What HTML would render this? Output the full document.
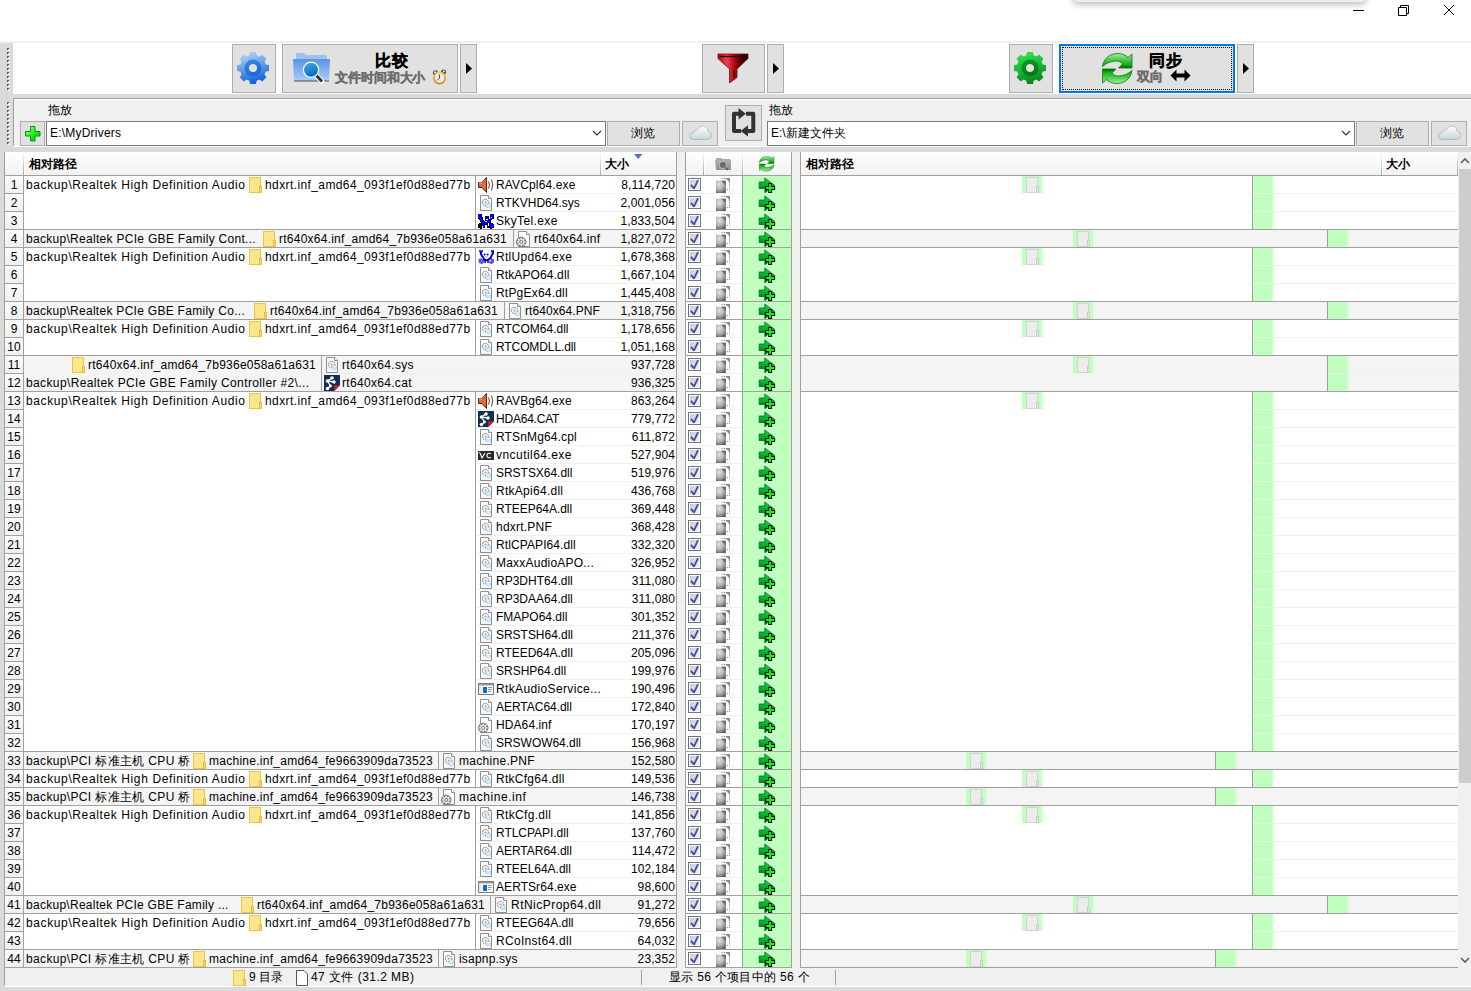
<!DOCTYPE html><html><head><meta charset="utf-8"><style>
html,body{margin:0;padding:0;width:1471px;height:991px;overflow:hidden;background:#fff;}
body{position:relative;font-family:"Liberation Sans",sans-serif;font-size:12px;color:#000;}
body>div,body>svg{position:absolute;}
body>div>svg{position:absolute;left:0;top:0;}
.t{white-space:nowrap;}
</style></head><body><svg width="0" height="0" style="position:absolute;left:0;top:0">
<defs>
 <linearGradient id="gDocFill" x1="0" y1="0" x2="0" y2="1"><stop offset="0" stop-color="#ffffff"/><stop offset="1" stop-color="#f2f4f6"/></linearGradient>
 <g id="iFolder"><rect x="0.5" y="0.5" width="11" height="15" fill="#fde58e" stroke="#ebc545"/><rect x="10.5" y="9.5" width="2" height="6" fill="#f6d76e" stroke="#e6bd45"/></g>
 <g id="iFolderG"><rect x="0.5" y="0.5" width="11" height="15" fill="#ececec" stroke="#d4d0d4"/><rect x="10.5" y="9.5" width="2" height="6" fill="#e6e6e6" stroke="#cfcbcf"/></g>
 <g id="iDoc"><path d="M2.5 0.5 H10.5 L13.5 3.5 V15.5 H2.5 Z" fill="url(#gDocFill)" stroke="#8f8f8f"/><path d="M10.5 0.5 V3.5 H13.5" fill="#fff" stroke="#8f8f8f"/>
   <circle cx="7.5" cy="7.5" r="3.2" fill="#f0f0f0" stroke="#6a6a6a" stroke-width="1" stroke-dasharray="1.2 0.9"/><path d="M6.5 7.5 H8.5 M7.5 6.5 V8.5" stroke="#a0a0a0" stroke-width="0.8"/><circle cx="10.4" cy="10.4" r="2.3" fill="#d8ecfa" stroke="#7ab8e8" stroke-width="0.9" stroke-dasharray="1 0.8"/></g>
 <g id="iInf"><path d="M2.5 0.5 H10.5 L13.5 3.5 V15.5 H2.5 Z" fill="#fff" stroke="#8f8f8f"/><path d="M10.5 0.5 V3.5 H13.5" fill="#fff" stroke="#8f8f8f"/>
   <path d="M3.40 7.78 L4.00 6.15 L6.40 6.15 L7.00 7.78 L6.13 7.42 L7.71 6.69 L9.41 8.39 L8.68 9.97 L8.32 9.10 L9.95 9.70 L9.95 12.10 L8.32 12.70 L8.68 11.83 L9.41 13.41 L7.71 15.11 L6.13 14.38 L7.00 14.02 L6.40 15.65 L4.00 15.65 L3.40 14.02 L4.27 14.38 L2.69 15.11 L0.99 13.41 L1.72 11.83 L2.08 12.70 L0.45 12.10 L0.45 9.70 L2.08 9.10 L1.72 9.97 L0.99 8.39 L2.69 6.69 L4.27 7.42 Z M3.70 10.90 A1.5 1.5 0 1 0 6.70 10.90 A1.5 1.5 0 1 0 3.70 10.90 Z" fill="#dfe4e8" stroke="#707070" stroke-width="0.9" fill-rule="evenodd"/></g>
 <g id="iSpeaker"><path d="M0.5 5.5 H4 L8.5 0.5 V15.5 L4 10.5 H0.5 Z" fill="#e8683c" stroke="#3a1408" stroke-width="0.9"/><path d="M1 6 H4" stroke="#ffc0a0" stroke-width="1"/>
   <path d="M10.5 4.5 Q12.5 8 10.5 11.5" fill="none" stroke="#6a3a2a" stroke-width="1"/><path d="M13.5 2.5 Q16 8 13.5 13.5" fill="none" stroke="#6a3a2a" stroke-width="1"/></g>
 <g id="iCrab"><rect x="0" y="1" width="1" height="1" fill="#0000ff"/><rect x="1" y="1" width="1" height="1" fill="#0000ff"/><rect x="2" y="1" width="1" height="1" fill="#0000ff"/><rect x="3" y="1" width="1" height="1" fill="#000"/><rect x="12" y="1" width="1" height="1" fill="#0000ff"/><rect x="13" y="1" width="1" height="1" fill="#000"/><rect x="14" y="1" width="1" height="1" fill="#0000ff"/><rect x="15" y="1" width="1" height="1" fill="#0000ff"/><rect x="0" y="2" width="1" height="1" fill="#0000ff"/><rect x="1" y="2" width="1" height="1" fill="#000"/><rect x="2" y="2" width="1" height="1" fill="#0000ff"/><rect x="3" y="2" width="1" height="1" fill="#000"/><rect x="12" y="2" width="1" height="1" fill="#0000ff"/><rect x="13" y="2" width="1" height="1" fill="#0000ff"/><rect x="14" y="2" width="1" height="1" fill="#0000ff"/><rect x="15" y="2" width="1" height="1" fill="#0000ff"/><rect x="0" y="3" width="1" height="1" fill="#0000ff"/><rect x="1" y="3" width="1" height="1" fill="#0000ff"/><rect x="2" y="3" width="1" height="1" fill="#0000ff"/><rect x="3" y="3" width="1" height="1" fill="#000"/><rect x="7" y="3" width="1" height="1" fill="#0000ff"/><rect x="8" y="3" width="1" height="1" fill="#000"/><rect x="9" y="3" width="1" height="1" fill="#0000ff"/><rect x="10" y="3" width="1" height="1" fill="#0000ff"/><rect x="12" y="3" width="1" height="1" fill="#0000ff"/><rect x="13" y="3" width="1" height="1" fill="#0000ff"/><rect x="14" y="3" width="1" height="1" fill="#0000ff"/><rect x="15" y="3" width="1" height="1" fill="#000"/><rect x="0" y="4" width="1" height="1" fill="#0000ff"/><rect x="1" y="4" width="1" height="1" fill="#0000ff"/><rect x="2" y="4" width="1" height="1" fill="#0000ff"/><rect x="3" y="4" width="1" height="1" fill="#0000ff"/><rect x="4" y="4" width="1" height="1" fill="#000"/><rect x="7" y="4" width="1" height="1" fill="#0000ff"/><rect x="8" y="4" width="1" height="1" fill="#000"/><rect x="9" y="4" width="1" height="1" fill="#0000ff"/><rect x="10" y="4" width="1" height="1" fill="#0000ff"/><rect x="12" y="4" width="1" height="1" fill="#0000ff"/><rect x="13" y="4" width="1" height="1" fill="#fff"/><rect x="14" y="4" width="1" height="1" fill="#0000ff"/><rect x="15" y="4" width="1" height="1" fill="#000"/><rect x="0" y="5" width="1" height="1" fill="#000"/><rect x="1" y="5" width="1" height="1" fill="#0000ff"/><rect x="2" y="5" width="1" height="1" fill="#0000ff"/><rect x="3" y="5" width="1" height="1" fill="#000"/><rect x="4" y="5" width="1" height="1" fill="#000"/><rect x="7" y="5" width="1" height="1" fill="#0000ff"/><rect x="8" y="5" width="1" height="1" fill="#0000ff"/><rect x="9" y="5" width="1" height="1" fill="#0000ff"/><rect x="10" y="5" width="1" height="1" fill="#000"/><rect x="12" y="5" width="1" height="1" fill="#0000ff"/><rect x="13" y="5" width="1" height="1" fill="#0000ff"/><rect x="14" y="5" width="1" height="1" fill="#000"/><rect x="15" y="5" width="1" height="1" fill="#000"/><rect x="1" y="6" width="1" height="1" fill="#000"/><rect x="2" y="6" width="1" height="1" fill="#0000ff"/><rect x="3" y="6" width="1" height="1" fill="#0000ff"/><rect x="4" y="6" width="1" height="1" fill="#000"/><rect x="7" y="6" width="1" height="1" fill="#0000ff"/><rect x="8" y="6" width="1" height="1" fill="#fff"/><rect x="9" y="6" width="1" height="1" fill="#fff"/><rect x="10" y="6" width="1" height="1" fill="#000"/><rect x="11" y="6" width="1" height="1" fill="#0000ff"/><rect x="12" y="6" width="1" height="1" fill="#0000ff"/><rect x="13" y="6" width="1" height="1" fill="#000"/><rect x="2" y="7" width="1" height="1" fill="#0000ff"/><rect x="3" y="7" width="1" height="1" fill="#0000ff"/><rect x="4" y="7" width="1" height="1" fill="#0000ff"/><rect x="5" y="7" width="1" height="1" fill="#000"/><rect x="7" y="7" width="1" height="1" fill="#000"/><rect x="8" y="7" width="1" height="1" fill="#0000ff"/><rect x="9" y="7" width="1" height="1" fill="#0000ff"/><rect x="10" y="7" width="1" height="1" fill="#000"/><rect x="11" y="7" width="1" height="1" fill="#0000ff"/><rect x="12" y="7" width="1" height="1" fill="#000"/><rect x="2" y="8" width="1" height="1" fill="#000"/><rect x="3" y="8" width="1" height="1" fill="#0000ff"/><rect x="4" y="8" width="1" height="1" fill="#0000ff"/><rect x="5" y="8" width="1" height="1" fill="#0000ff"/><rect x="6" y="8" width="1" height="1" fill="#000"/><rect x="7" y="8" width="1" height="1" fill="#fff"/><rect x="8" y="8" width="1" height="1" fill="#fff"/><rect x="9" y="8" width="1" height="1" fill="#0000ff"/><rect x="10" y="8" width="1" height="1" fill="#0000ff"/><rect x="11" y="8" width="1" height="1" fill="#0000ff"/><rect x="12" y="8" width="1" height="1" fill="#000"/><rect x="3" y="9" width="1" height="1" fill="#000"/><rect x="4" y="9" width="1" height="1" fill="#0000ff"/><rect x="5" y="9" width="1" height="1" fill="#0000ff"/><rect x="6" y="9" width="1" height="1" fill="#0000ff"/><rect x="7" y="9" width="1" height="1" fill="#000"/><rect x="8" y="9" width="1" height="1" fill="#0000ff"/><rect x="9" y="9" width="1" height="1" fill="#0000ff"/><rect x="10" y="9" width="1" height="1" fill="#0000ff"/><rect x="11" y="9" width="1" height="1" fill="#000"/><rect x="12" y="9" width="1" height="1" fill="#000"/><rect x="1" y="10" width="1" height="1" fill="#000"/><rect x="2" y="10" width="1" height="1" fill="#000"/><rect x="3" y="10" width="1" height="1" fill="#000"/><rect x="4" y="10" width="1" height="1" fill="#0000ff"/><rect x="5" y="10" width="1" height="1" fill="#0000ff"/><rect x="6" y="10" width="1" height="1" fill="#0000ff"/><rect x="7" y="10" width="1" height="1" fill="#0000ff"/><rect x="8" y="10" width="1" height="1" fill="#0000ff"/><rect x="9" y="10" width="1" height="1" fill="#0000ff"/><rect x="10" y="10" width="1" height="1" fill="#fff"/><rect x="11" y="10" width="1" height="1" fill="#000"/><rect x="12" y="10" width="1" height="1" fill="#000"/><rect x="13" y="10" width="1" height="1" fill="#0000ff"/><rect x="14" y="10" width="1" height="1" fill="#0000ff"/><rect x="0" y="11" width="1" height="1" fill="#000"/><rect x="1" y="11" width="1" height="1" fill="#0000ff"/><rect x="2" y="11" width="1" height="1" fill="#000"/><rect x="3" y="11" width="1" height="1" fill="#000"/><rect x="4" y="11" width="1" height="1" fill="#0000ff"/><rect x="5" y="11" width="1" height="1" fill="#0000ff"/><rect x="6" y="11" width="1" height="1" fill="#0000ff"/><rect x="7" y="11" width="1" height="1" fill="#000"/><rect x="8" y="11" width="1" height="1" fill="#000"/><rect x="9" y="11" width="1" height="1" fill="#0000ff"/><rect x="10" y="11" width="1" height="1" fill="#fff"/><rect x="11" y="11" width="1" height="1" fill="#000"/><rect x="12" y="11" width="1" height="1" fill="#0000ff"/><rect x="13" y="11" width="1" height="1" fill="#0000ff"/><rect x="14" y="11" width="1" height="1" fill="#0000ff"/><rect x="15" y="11" width="1" height="1" fill="#0000ff"/><rect x="0" y="12" width="1" height="1" fill="#000"/><rect x="1" y="12" width="1" height="1" fill="#000"/><rect x="2" y="12" width="1" height="1" fill="#000"/><rect x="3" y="12" width="1" height="1" fill="#000"/><rect x="4" y="12" width="1" height="1" fill="#000"/><rect x="5" y="12" width="1" height="1" fill="#0000ff"/><rect x="6" y="12" width="1" height="1" fill="#0000ff"/><rect x="9" y="12" width="1" height="1" fill="#0000ff"/><rect x="10" y="12" width="1" height="1" fill="#fff"/><rect x="11" y="12" width="1" height="1" fill="#000"/><rect x="12" y="12" width="1" height="1" fill="#0000ff"/><rect x="13" y="12" width="1" height="1" fill="#0000ff"/><rect x="14" y="12" width="1" height="1" fill="#0000ff"/><rect x="15" y="12" width="1" height="1" fill="#0000ff"/><rect x="0" y="13" width="1" height="1" fill="#000"/><rect x="1" y="13" width="1" height="1" fill="#000"/><rect x="2" y="13" width="1" height="1" fill="#000"/><rect x="3" y="13" width="1" height="1" fill="#000"/><rect x="5" y="13" width="1" height="1" fill="#0000ff"/><rect x="6" y="13" width="1" height="1" fill="#0000ff"/><rect x="9" y="13" width="1" height="1" fill="#0000ff"/><rect x="10" y="13" width="1" height="1" fill="#000"/><rect x="11" y="13" width="1" height="1" fill="#000"/><rect x="12" y="13" width="1" height="1" fill="#0000ff"/><rect x="13" y="13" width="1" height="1" fill="#0000ff"/><rect x="14" y="13" width="1" height="1" fill="#0000ff"/><rect x="15" y="13" width="1" height="1" fill="#0000ff"/><rect x="0" y="14" width="1" height="1" fill="#000"/><rect x="1" y="14" width="1" height="1" fill="#000"/><rect x="2" y="14" width="1" height="1" fill="#000"/><rect x="3" y="14" width="1" height="1" fill="#000"/><rect x="5" y="14" width="1" height="1" fill="#000"/><rect x="6" y="14" width="1" height="1" fill="#000"/><rect x="9" y="14" width="1" height="1" fill="#000"/><rect x="10" y="14" width="1" height="1" fill="#000"/><rect x="11" y="14" width="1" height="1" fill="#000"/><rect x="12" y="14" width="1" height="1" fill="#0000ff"/><rect x="13" y="14" width="1" height="1" fill="#0000ff"/><rect x="14" y="14" width="1" height="1" fill="#0000ff"/><rect x="15" y="14" width="1" height="1" fill="#000"/><rect x="2" y="15" width="1" height="1" fill="#000"/><rect x="3" y="15" width="1" height="1" fill="#000"/><rect x="12" y="15" width="1" height="1" fill="#000"/><rect x="13" y="15" width="1" height="1" fill="#000"/></g>
 <g id="iCrab2"><path d="M0.3 10.2 L2.8 9.2 L5.8 10.2 L6.6 13 L4 15.3 L1 14 Z" fill="#5a5ae0"/><path d="M10.3 10.2 L13.3 9.2 L16 10.2 L16 13.5 L13.5 15.3 L10.8 13.8 Z" fill="#5a5ae0"/><circle cx="11.8" cy="11.6" r="1" fill="#fff"/>
   <path d="M2.6 3.8 L3.6 6.5 L5.2 8.3 L6.2 10.3 L8.6 11.3 L10.6 10.5 L12.6 8.8 L13.8 6.5 L14.8 3.8" fill="none" stroke="#0000d0" stroke-width="1.9" stroke-linejoin="round"/>
   <path d="M1.6 1 L2.8 4.2 L4.6 1.2" fill="none" stroke="#0000d0" stroke-width="1.6"/><path d="M13.4 1.2 L15 4.2 L16.2 1" fill="none" stroke="#0000d0" stroke-width="1.6"/>
   <circle cx="6.6" cy="5.6" r="1" fill="#0000c8"/><circle cx="9.6" cy="5.6" r="1" fill="#0000c8"/><path d="M7 7.6 Q8.2 8.8 9.6 7.6" fill="none" stroke="#9a9ae8" stroke-width="1"/>
   <path d="M6.6 10.5 L7.4 14.2 M9.6 11 L10.2 14" stroke="#0000c8" stroke-width="1.4"/></g>
 <g id="iCat"><path d="M0 0 H16 V10 L10 16 H0 Z" fill="#133050"/><path d="M8 3 L3.5 6 L9.5 7 M3.5 6 L6.5 11 L3.5 13.5" stroke="#fff" stroke-width="1.3" fill="none"/>
   <circle cx="8" cy="3" r="1.8" fill="#fff"/><circle cx="3.5" cy="6" r="1.8" fill="#fff"/><circle cx="10" cy="7" r="1.7" fill="#fff"/><circle cx="6.5" cy="11" r="1.4" fill="#fff"/><circle cx="3.5" cy="13.5" r="1.8" fill="#fff"/>
   <path d="M10 10.5 H16 L10.5 16 Z" fill="#d81e2a"/></g>
 <g id="iVnc"><rect x="0" y="4" width="16" height="9" fill="#2a2a2a"/><path d="M2 6 L4 11 L7 6 M13 6.5 Q9 5.5 9 8.5 Q9 11.5 13 10.5" fill="none" stroke="#fff" stroke-width="1.1"/><path d="M0.5 6 L2 5" stroke="#fff" stroke-width="0.8"/></g>
 <g id="iWin"><rect x="0.5" y="2.5" width="15" height="11" fill="#fff" stroke="#7a7a7a"/><rect x="1" y="3" width="14" height="1.5" fill="#9a9a9a"/><rect x="1" y="4.5" width="2.5" height="8.5" fill="#e8e8e8"/><rect x="5" y="6" width="4" height="6" fill="#0a6ad8"/><path d="M10 6.5 H14 M10 8.5 H14 M10 10.5 H13" stroke="#8a8a8a" stroke-width="0.9"/></g>
 <linearGradient id="gChk" x1="0" y1="0" x2="1" y2="1"><stop offset="0" stop-color="#c8ccd8"/><stop offset="1" stop-color="#f0f0f4"/></linearGradient>
 <g id="iCheck"><rect x="0.5" y="0.5" width="12" height="12" fill="#fff" stroke="#747474"/><rect x="2" y="2" width="9" height="9" fill="url(#gChk)"/><path d="M3.3 7.3 L6 10.3 L9.8 2.7" fill="none" stroke="#3a4f9c" stroke-width="1.8" stroke-linecap="round" stroke-linejoin="round"/></g>
 <linearGradient id="gCat" x1="0" y1="0" x2="1" y2="0.3"><stop offset="0" stop-color="#cfcfcf"/><stop offset="0.45" stop-color="#9a9a9a"/><stop offset="1" stop-color="#5a5a5a"/></linearGradient>
 <radialGradient id="gCat2" cx="0.35" cy="0.3" r="0.8"><stop offset="0" stop-color="#e4e4e4"/><stop offset="0.55" stop-color="#b0b0b0"/><stop offset="1" stop-color="#5a5a5a"/></radialGradient>
 <g id="iCatg"><path d="M4 4.7 H13.8 V17 H4 Z" fill="url(#gCat2)"/><path d="M9.3 4.7 H13.8 V9.2 Z" fill="#6a6a6a"/>
   <path d="M9.5 2.5 H17.5 V13.5 H14" fill="none" stroke="#777" stroke-width="1" stroke-dasharray="1 1.3"/><path d="M13 2 H18 V6.5 Z" fill="#8a8a8a"/></g>
 <linearGradient id="gAdd" x1="0.2" y1="0" x2="0.1" y2="1"><stop offset="0" stop-color="#10e040"/><stop offset="0.5" stop-color="#00a828"/><stop offset="1" stop-color="#005a10"/></linearGradient>
 <g id="iAdd"><path d="M4.2 6 H9.8 V2 L19.8 9.6 L9.8 16.7 V12.5 H4.2 Z" fill="url(#gAdd)" stroke="#00501a" stroke-width="0.7" stroke-linejoin="round"/>
   <path d="M13.1 7 H17.1 V10 H20.1 V14 H17.1 V17 H13.1 V14 H10.1 V10 H13.1 Z" fill="#000"/><path d="M14.1 8 H16.1 V11 H19.1 V13 H16.1 V16 H14.1 V13 H11.1 V11 H14.1 Z" fill="#00ff00"/></g>
 <g id="iTri"><path d="M0 0 L6 5.5 L0 11 Z" fill="#000"/></g>
 <linearGradient id="gSyncA" x1="0" y1="0" x2="0" y2="1"><stop offset="0" stop-color="#a0f0a0"/><stop offset="0.45" stop-color="#48c848"/><stop offset="0.75" stop-color="#18b018"/><stop offset="1" stop-color="#006a00"/></linearGradient>
 <g id="iSyncHalf"><path d="M0.5 13.5 C1.5 5.5 8 0.5 15.5 0.5 C20 0.5 23.5 2 26 4.5 L30 1 V15 H16.5 L20.5 11 C19 9.5 17.5 8 15 8 C9 8 4 10 0.5 13.5 Z" fill="url(#gSyncA)" stroke="#067a06" stroke-width="0.8"/></g>
 <g id="iSync"><use href="#iSyncHalf"/><use href="#iSyncHalf" transform="rotate(180 15.25 15.5)"/></g>
</defs></svg><div style="left:0px;top:0px;width:1471px;height:41px;background:#fff"></div>
<div style="left:1074px;top:-10px;width:291px;height:12px;background:#e9eef6;box-shadow:0 1px 7px 1px rgba(0,0,0,0.30);border-radius:0 0 4px 4px"></div>
<svg style="left:1350px;top:0px" width="121" height="22" viewBox="0 0 121 22" ><path d="M3 10.5 H14" stroke="#000" stroke-width="1"/><path d="M48.5 7.5 H56.5 V15.5 H48.5 Z M50.5 7.5 V5.5 H58.5 V13.5 H56.5" fill="none" stroke="#000"/><path d="M94 5 L104 15 M104 5 L94 15" stroke="#000" stroke-width="1"/></svg>
<div style="left:0px;top:41px;width:1471px;height:2px;background:#f0f0f0"></div>
<div style="left:0px;top:43px;width:13px;height:948px;background:#dadada"></div>
<div style="left:13px;top:43px;width:1458px;height:51px;background:#fff"></div>
<div style="left:13px;top:94px;width:1458px;height:4px;background:#dadada"></div>
<div style="left:7px;top:48px;width:2px;height:1px;background:#585858"></div>
<div style="left:7px;top:49px;width:1px;height:1px;background:#585858"></div>
<div style="left:8px;top:49px;width:1px;height:1px;background:#c8c8c8"></div>
<div style="left:9px;top:49px;width:1px;height:1px;background:#f4f4f4"></div>
<div style="left:8px;top:50px;width:2px;height:1px;background:#fff"></div>
<div style="left:7px;top:52px;width:2px;height:1px;background:#585858"></div>
<div style="left:7px;top:53px;width:1px;height:1px;background:#585858"></div>
<div style="left:8px;top:53px;width:1px;height:1px;background:#c8c8c8"></div>
<div style="left:9px;top:53px;width:1px;height:1px;background:#f4f4f4"></div>
<div style="left:8px;top:54px;width:2px;height:1px;background:#fff"></div>
<div style="left:7px;top:56px;width:2px;height:1px;background:#585858"></div>
<div style="left:7px;top:57px;width:1px;height:1px;background:#585858"></div>
<div style="left:8px;top:57px;width:1px;height:1px;background:#c8c8c8"></div>
<div style="left:9px;top:57px;width:1px;height:1px;background:#f4f4f4"></div>
<div style="left:8px;top:58px;width:2px;height:1px;background:#fff"></div>
<div style="left:7px;top:60px;width:2px;height:1px;background:#585858"></div>
<div style="left:7px;top:61px;width:1px;height:1px;background:#585858"></div>
<div style="left:8px;top:61px;width:1px;height:1px;background:#c8c8c8"></div>
<div style="left:9px;top:61px;width:1px;height:1px;background:#f4f4f4"></div>
<div style="left:8px;top:62px;width:2px;height:1px;background:#fff"></div>
<div style="left:7px;top:64px;width:2px;height:1px;background:#585858"></div>
<div style="left:7px;top:65px;width:1px;height:1px;background:#585858"></div>
<div style="left:8px;top:65px;width:1px;height:1px;background:#c8c8c8"></div>
<div style="left:9px;top:65px;width:1px;height:1px;background:#f4f4f4"></div>
<div style="left:8px;top:66px;width:2px;height:1px;background:#fff"></div>
<div style="left:7px;top:68px;width:2px;height:1px;background:#585858"></div>
<div style="left:7px;top:69px;width:1px;height:1px;background:#585858"></div>
<div style="left:8px;top:69px;width:1px;height:1px;background:#c8c8c8"></div>
<div style="left:9px;top:69px;width:1px;height:1px;background:#f4f4f4"></div>
<div style="left:8px;top:70px;width:2px;height:1px;background:#fff"></div>
<div style="left:7px;top:72px;width:2px;height:1px;background:#585858"></div>
<div style="left:7px;top:73px;width:1px;height:1px;background:#585858"></div>
<div style="left:8px;top:73px;width:1px;height:1px;background:#c8c8c8"></div>
<div style="left:9px;top:73px;width:1px;height:1px;background:#f4f4f4"></div>
<div style="left:8px;top:74px;width:2px;height:1px;background:#fff"></div>
<div style="left:7px;top:76px;width:2px;height:1px;background:#585858"></div>
<div style="left:7px;top:77px;width:1px;height:1px;background:#585858"></div>
<div style="left:8px;top:77px;width:1px;height:1px;background:#c8c8c8"></div>
<div style="left:9px;top:77px;width:1px;height:1px;background:#f4f4f4"></div>
<div style="left:8px;top:78px;width:2px;height:1px;background:#fff"></div>
<div style="left:7px;top:80px;width:2px;height:1px;background:#585858"></div>
<div style="left:7px;top:81px;width:1px;height:1px;background:#585858"></div>
<div style="left:8px;top:81px;width:1px;height:1px;background:#c8c8c8"></div>
<div style="left:9px;top:81px;width:1px;height:1px;background:#f4f4f4"></div>
<div style="left:8px;top:82px;width:2px;height:1px;background:#fff"></div>
<div style="left:7px;top:84px;width:2px;height:1px;background:#585858"></div>
<div style="left:7px;top:85px;width:1px;height:1px;background:#585858"></div>
<div style="left:8px;top:85px;width:1px;height:1px;background:#c8c8c8"></div>
<div style="left:9px;top:85px;width:1px;height:1px;background:#f4f4f4"></div>
<div style="left:8px;top:86px;width:2px;height:1px;background:#fff"></div>
<div style="left:7px;top:88px;width:2px;height:1px;background:#585858"></div>
<div style="left:7px;top:89px;width:1px;height:1px;background:#585858"></div>
<div style="left:8px;top:89px;width:1px;height:1px;background:#c8c8c8"></div>
<div style="left:9px;top:89px;width:1px;height:1px;background:#f4f4f4"></div>
<div style="left:8px;top:90px;width:2px;height:1px;background:#fff"></div>
<div style="left:7px;top:102px;width:2px;height:1px;background:#585858"></div>
<div style="left:7px;top:103px;width:1px;height:1px;background:#585858"></div>
<div style="left:8px;top:103px;width:1px;height:1px;background:#c8c8c8"></div>
<div style="left:9px;top:103px;width:1px;height:1px;background:#f4f4f4"></div>
<div style="left:8px;top:104px;width:2px;height:1px;background:#fff"></div>
<div style="left:7px;top:106px;width:2px;height:1px;background:#585858"></div>
<div style="left:7px;top:107px;width:1px;height:1px;background:#585858"></div>
<div style="left:8px;top:107px;width:1px;height:1px;background:#c8c8c8"></div>
<div style="left:9px;top:107px;width:1px;height:1px;background:#f4f4f4"></div>
<div style="left:8px;top:108px;width:2px;height:1px;background:#fff"></div>
<div style="left:7px;top:110px;width:2px;height:1px;background:#585858"></div>
<div style="left:7px;top:111px;width:1px;height:1px;background:#585858"></div>
<div style="left:8px;top:111px;width:1px;height:1px;background:#c8c8c8"></div>
<div style="left:9px;top:111px;width:1px;height:1px;background:#f4f4f4"></div>
<div style="left:8px;top:112px;width:2px;height:1px;background:#fff"></div>
<div style="left:7px;top:114px;width:2px;height:1px;background:#585858"></div>
<div style="left:7px;top:115px;width:1px;height:1px;background:#585858"></div>
<div style="left:8px;top:115px;width:1px;height:1px;background:#c8c8c8"></div>
<div style="left:9px;top:115px;width:1px;height:1px;background:#f4f4f4"></div>
<div style="left:8px;top:116px;width:2px;height:1px;background:#fff"></div>
<div style="left:7px;top:118px;width:2px;height:1px;background:#585858"></div>
<div style="left:7px;top:119px;width:1px;height:1px;background:#585858"></div>
<div style="left:8px;top:119px;width:1px;height:1px;background:#c8c8c8"></div>
<div style="left:9px;top:119px;width:1px;height:1px;background:#f4f4f4"></div>
<div style="left:8px;top:120px;width:2px;height:1px;background:#fff"></div>
<div style="left:7px;top:122px;width:2px;height:1px;background:#585858"></div>
<div style="left:7px;top:123px;width:1px;height:1px;background:#585858"></div>
<div style="left:8px;top:123px;width:1px;height:1px;background:#c8c8c8"></div>
<div style="left:9px;top:123px;width:1px;height:1px;background:#f4f4f4"></div>
<div style="left:8px;top:124px;width:2px;height:1px;background:#fff"></div>
<div style="left:7px;top:126px;width:2px;height:1px;background:#585858"></div>
<div style="left:7px;top:127px;width:1px;height:1px;background:#585858"></div>
<div style="left:8px;top:127px;width:1px;height:1px;background:#c8c8c8"></div>
<div style="left:9px;top:127px;width:1px;height:1px;background:#f4f4f4"></div>
<div style="left:8px;top:128px;width:2px;height:1px;background:#fff"></div>
<div style="left:7px;top:130px;width:2px;height:1px;background:#585858"></div>
<div style="left:7px;top:131px;width:1px;height:1px;background:#585858"></div>
<div style="left:8px;top:131px;width:1px;height:1px;background:#c8c8c8"></div>
<div style="left:9px;top:131px;width:1px;height:1px;background:#f4f4f4"></div>
<div style="left:8px;top:132px;width:2px;height:1px;background:#fff"></div>
<div style="left:7px;top:134px;width:2px;height:1px;background:#585858"></div>
<div style="left:7px;top:135px;width:1px;height:1px;background:#585858"></div>
<div style="left:8px;top:135px;width:1px;height:1px;background:#c8c8c8"></div>
<div style="left:9px;top:135px;width:1px;height:1px;background:#f4f4f4"></div>
<div style="left:8px;top:136px;width:2px;height:1px;background:#fff"></div>
<div style="left:7px;top:138px;width:2px;height:1px;background:#585858"></div>
<div style="left:7px;top:139px;width:1px;height:1px;background:#585858"></div>
<div style="left:8px;top:139px;width:1px;height:1px;background:#c8c8c8"></div>
<div style="left:9px;top:139px;width:1px;height:1px;background:#f4f4f4"></div>
<div style="left:8px;top:140px;width:2px;height:1px;background:#fff"></div>
<div style="left:7px;top:142px;width:2px;height:1px;background:#585858"></div>
<div style="left:7px;top:143px;width:1px;height:1px;background:#585858"></div>
<div style="left:8px;top:143px;width:1px;height:1px;background:#c8c8c8"></div>
<div style="left:9px;top:143px;width:1px;height:1px;background:#f4f4f4"></div>
<div style="left:8px;top:144px;width:2px;height:1px;background:#fff"></div>
<div style="left:232px;top:44px;width:42px;height:47px;background:#e1e1e1;border:1px solid #adadad;"></div>
<div style="left:282px;top:44px;width:174px;height:47px;background:#e1e1e1;border:1px solid #adadad;"></div>
<div style="left:460px;top:44px;width:15px;height:47px;background:#e1e1e1;border:1px solid #adadad;"></div>
<div style="left:702px;top:44px;width:61px;height:47px;background:#e1e1e1;border:1px solid #adadad;"></div>
<div style="left:767px;top:44px;width:15px;height:47px;background:#e1e1e1;border:1px solid #adadad;"></div>
<div style="left:1009px;top:44px;width:42px;height:47px;background:#e1e1e1;border:1px solid #adadad;"></div>
<div style="left:1059px;top:44px;width:172px;height:45px;background:#e1e1e1;border:2px solid #0078d7"></div>
<div style="left:1061px;top:46px;width:172px;height:45px;border:1px dotted #111;box-sizing:border-box;left:1062px;top:47px;width:170px;height:43px"></div>
<div style="left:1237px;top:44px;width:15px;height:47px;background:#e1e1e1;border:1px solid #adadad;"></div>
<svg style="left:466px;top:63px" width="6" height="11"><use href="#iTri"/></svg>
<svg style="left:773px;top:63px" width="6" height="11"><use href="#iTri"/></svg>
<svg style="left:1243px;top:63px" width="6" height="11"><use href="#iTri"/></svg>
<div style="left:235px;top:50px;width:36px;height:36px"><svg width="36" height="36" viewBox="0 0 36 36"><defs><linearGradient id="gbg" x1="0" y1="0" x2="0.3" y2="1"><stop offset="0" stop-color="#c4e0fb"/><stop offset="1" stop-color="#1466d6"/></linearGradient><linearGradient id="gbr" x1="0" y1="0" x2="0.4" y2="1"><stop offset="0" stop-color="#3a8ae6"/><stop offset="1" stop-color="#1a6ad8"/></linearGradient></defs><path d="M14.40 5.30 L15.00 1.98 L21.00 1.98 L21.60 5.30 L24.43 6.47 L27.21 4.55 L31.45 8.79 L29.53 11.57 L30.70 14.40 L34.02 15.00 L34.02 21.00 L30.70 21.60 L29.53 24.43 L31.45 27.21 L27.21 31.45 L24.43 29.53 L21.60 30.70 L21.00 34.02 L15.00 34.02 L14.40 30.70 L11.57 29.53 L8.79 31.45 L4.55 27.21 L6.47 24.43 L5.30 21.60 L1.98 21.00 L1.98 15.00 L5.30 14.40 L6.47 11.57 L4.55 8.79 L8.79 4.55 L11.57 6.47 Z M13.90 18.00 A4.1 4.1 0 1 0 22.10 18.00 A4.1 4.1 0 1 0 13.90 18.00 Z" fill="url(#gbg)" fill-rule="evenodd"/><path d="M9.60 18.00 A8.4 8.4 0 1 0 26.40 18.00 A8.4 8.4 0 1 0 9.60 18.00 Z M13.90 18.00 A4.1 4.1 0 1 0 22.10 18.00 A4.1 4.1 0 1 0 13.90 18.00 Z" fill="url(#gbr)" fill-rule="evenodd"/></svg></div>
<div style="left:1012px;top:50px;width:36px;height:36px"><svg width="36" height="36" viewBox="0 0 36 36"><defs><linearGradient id="ggg" x1="0" y1="0" x2="0.3" y2="1"><stop offset="0" stop-color="#30f050"/><stop offset="1" stop-color="#0a8a22"/></linearGradient><linearGradient id="ggr" x1="0" y1="0" x2="0.4" y2="1"><stop offset="0" stop-color="#0c9a2a"/><stop offset="1" stop-color="#067a1a"/></linearGradient></defs><path d="M14.40 5.30 L15.00 1.98 L21.00 1.98 L21.60 5.30 L24.43 6.47 L27.21 4.55 L31.45 8.79 L29.53 11.57 L30.70 14.40 L34.02 15.00 L34.02 21.00 L30.70 21.60 L29.53 24.43 L31.45 27.21 L27.21 31.45 L24.43 29.53 L21.60 30.70 L21.00 34.02 L15.00 34.02 L14.40 30.70 L11.57 29.53 L8.79 31.45 L4.55 27.21 L6.47 24.43 L5.30 21.60 L1.98 21.00 L1.98 15.00 L5.30 14.40 L6.47 11.57 L4.55 8.79 L8.79 4.55 L11.57 6.47 Z M13.90 18.00 A4.1 4.1 0 1 0 22.10 18.00 A4.1 4.1 0 1 0 13.90 18.00 Z" fill="url(#ggg)" fill-rule="evenodd"/><path d="M9.60 18.00 A8.4 8.4 0 1 0 26.40 18.00 A8.4 8.4 0 1 0 9.60 18.00 Z M13.90 18.00 A4.1 4.1 0 1 0 22.10 18.00 A4.1 4.1 0 1 0 13.90 18.00 Z" fill="url(#ggr)" fill-rule="evenodd"/></svg></div>
<svg style="left:290px;top:48px" width="44" height="40" viewBox="0 0 44 40" ><defs><linearGradient id="gFB" x1="0" y1="0" x2="0" y2="1"><stop offset="0" stop-color="#5a94e4"/><stop offset="1" stop-color="#a6cef8"/></linearGradient><linearGradient id="gMag" x1="0" y1="0" x2="0.4" y2="1"><stop offset="0" stop-color="#4aaae0"/><stop offset="1" stop-color="#0070c6"/></linearGradient></defs><path d="M6 11 V6 Q6 5 7 5 H14 L16 7 H36 Q37 7 37 8 V11 Z" fill="#9ec2f0"/><path d="M3 11 H40 L39 33 H4 Z" fill="url(#gFB)"/><path d="M4 33 H39" stroke="#505050" stroke-width="1.2"/><path d="M26 27 L32 33.5" stroke="#fff" stroke-width="5" stroke-linecap="round"/><path d="M26 27 L32 33.5" stroke="#333" stroke-width="3" stroke-linecap="butt"/><circle cx="21" cy="21.8" r="8.2" fill="#fff"/><circle cx="21" cy="21.8" r="7" fill="url(#gMag)"/></svg>
<svg style="left:713px;top:50px" width="40" height="38" viewBox="0 0 40 38" ><defs><linearGradient id="gFun" x1="0" y1="0" x2="1" y2="0"><stop offset="0" stop-color="#a80c14"/><stop offset="0.3" stop-color="#e8454c"/><stop offset="0.5" stop-color="#c01018"/><stop offset="0.75" stop-color="#500000"/><stop offset="1" stop-color="#180000"/></linearGradient></defs><path d="M5 4 H35 V8.6 L24 19 V27.5 L16.5 33 V19 L5 8.6 Z" fill="url(#gFun)" stroke="#7a0a0a" stroke-width="0.8"/><path d="M6.5 6.5 H33.5" stroke="#300000" stroke-width="1.4"/><path d="M21 20 V27" stroke="#300000" stroke-width="1.5"/></svg>
<svg style="left:1102px;top:53px" width="32" height="32"><use href="#iSync"/></svg>
<svg style="left:1170px;top:69px" width="22" height="13" viewBox="0 0 22 13" ><path d="M0.5 6.5 L6.5 0.5 V4.5 H14.5 V0.5 L20.5 6.5 L14.5 12.5 V8.5 H6.5 V12.5 Z" fill="#000"/></svg>
<div class="t" style="left:375px;top:51px;height:20px;line-height:20px;font-size:16px;font-weight:bold;letter-spacing:0.5px;-webkit-text-stroke:0.3px #000">比较</div>
<div class="t" style="left:335px;top:69px;height:18px;line-height:18px;font-size:13px;font-weight:bold;color:#6d6d6d;letter-spacing:-0.1px;-webkit-text-stroke:0.35px #6d6d6d">文件时间和大小</div>
<svg style="left:431px;top:69px" width="17" height="17" viewBox="0 0 17 17" ><defs><linearGradient id="gClk" x1="0" y1="0" x2="0" y2="1"><stop offset="0" stop-color="#ffd040"/><stop offset="1" stop-color="#e07a00"/></linearGradient></defs><circle cx="4.5" cy="3.8" r="2.6" fill="#4a5560"/><circle cx="12.5" cy="3" r="2.6" fill="#4a5560"/><circle cx="4" cy="3.2" r="0.9" fill="#fff"/><circle cx="12.8" cy="2.4" r="0.9" fill="#fff"/><circle cx="8.5" cy="9" r="6.5" fill="url(#gClk)"/><circle cx="8.5" cy="9" r="4.8" fill="#d8f0fa"/><path d="M8.5 9 V5.5 M8.5 9 L6 11.5" stroke="#d02020" stroke-width="1"/></svg>
<div class="t" style="left:1149px;top:51px;height:20px;line-height:20px;font-size:16px;font-weight:bold;letter-spacing:0.5px;-webkit-text-stroke:0.3px #000">同步</div>
<div class="t" style="left:1137px;top:68px;height:18px;line-height:18px;font-size:13px;font-weight:bold;color:#6d6d6d;letter-spacing:-0.5px;-webkit-text-stroke:0.35px #6d6d6d">双向</div>
<div style="left:13px;top:98px;width:1458px;height:48px;background:#f0f0f0"></div>
<div style="left:13px;top:98px;width:1458px;height:1px;background:#a0a0a0"></div>
<div style="left:13px;top:98px;width:1px;height:48px;background:#a0a0a0"></div>
<div style="left:14px;top:99px;width:1457px;height:1px;background:#fbfbfb"></div>
<div style="left:13px;top:146px;width:1458px;height:1px;background:#fff"></div>
<div style="left:13px;top:147px;width:1458px;height:5px;background:#dadada"></div>
<div class="t" style="left:48px;top:101px;height:18px;line-height:18px;font-size:12px">拖放</div>
<div class="t" style="left:769px;top:101px;height:18px;line-height:18px;font-size:12px">拖放</div>
<div style="left:20px;top:121px;width:23px;height:23px;background:#e1e1e1;border:1px solid #adadad;"></div>
<svg style="left:25px;top:126px" width="16" height="16" viewBox="0 0 16 16" ><defs><linearGradient id="gPl" x1="0" y1="0" x2="1" y2="1"><stop offset="0" stop-color="#c0ffc0"/><stop offset="0.5" stop-color="#20f020"/><stop offset="1" stop-color="#00c000"/></linearGradient></defs><path d="M5.5 0.5 H10 V5.5 H15 V10 H10 V15 H5.5 V10 H0.5 V5.5 H5.5 Z" fill="url(#gPl)" stroke="#009a00" stroke-width="1"/></svg>
<div style="left:46px;top:121px;width:560px;height:25px;background:#fff;border:1px solid #7a7a7a;box-sizing:border-box"></div>
<div class="t" style="left:50px;top:124px;height:18px;line-height:18px;letter-spacing:0.213px;font-size:12px">E:\MyDrivers</div>
<div style="left:607px;top:121px;width:71px;height:23px;background:#e1e1e1;border:1px solid #adadad;"></div>
<div class="t" style="left:631px;top:124px;height:18px;line-height:18px;font-size:12px">浏览</div>
<div style="left:682px;top:121px;width:34px;height:23px;background:#e1e1e1;border:1px solid #adadad;"></div>
<div style="left:725px;top:105px;width:35px;height:34px;background:#e1e1e1;border:1px solid #adadad;"></div>
<div style="left:767px;top:121px;width:588px;height:25px;background:#fff;border:1px solid #7a7a7a;box-sizing:border-box"></div>
<div class="t" style="left:771px;top:124px;height:18px;line-height:18px;font-size:12px">E:\新建文件夹</div>
<div style="left:1356px;top:121px;width:71px;height:23px;background:#e1e1e1;border:1px solid #adadad;"></div>
<div class="t" style="left:1380px;top:124px;height:18px;line-height:18px;font-size:12px">浏览</div>
<div style="left:1431px;top:121px;width:34px;height:23px;background:#e1e1e1;border:1px solid #adadad;"></div>
<svg style="left:592px;top:130px" width="10" height="7" viewBox="0 0 10 7" ><path d="M1 1 L5 5 L9 1" fill="none" stroke="#333" stroke-width="1.1"/></svg>
<svg style="left:1341px;top:130px" width="10" height="7" viewBox="0 0 10 7" ><path d="M1 1 L5 5 L9 1" fill="none" stroke="#333" stroke-width="1.1"/></svg>
<svg style="left:689px;top:125px" width="23" height="16" viewBox="0 0 23 16" ><defs><linearGradient id="gCl" x1="0" y1="0" x2="0" y2="1"><stop offset="0" stop-color="#ffffff"/><stop offset="1" stop-color="#c8d4da"/></linearGradient></defs><path d="M4 14.5 Q0.5 14.5 0.5 11 Q0.5 7.5 4.5 7.5 Q6 4.5 8.5 4.5 Q10 1 13.5 1 Q18.5 1 19 6 Q22.5 7 22.5 10.5 Q22.5 14.5 18.5 14.5 Z" fill="url(#gCl)" stroke="#a8b4ba" stroke-width="0.8"/></svg>
<svg style="left:1438px;top:125px" width="23" height="16" viewBox="0 0 23 16" ><defs><linearGradient id="gCl" x1="0" y1="0" x2="0" y2="1"><stop offset="0" stop-color="#ffffff"/><stop offset="1" stop-color="#c8d4da"/></linearGradient></defs><path d="M4 14.5 Q0.5 14.5 0.5 11 Q0.5 7.5 4.5 7.5 Q6 4.5 8.5 4.5 Q10 1 13.5 1 Q18.5 1 19 6 Q22.5 7 22.5 10.5 Q22.5 14.5 18.5 14.5 Z" fill="url(#gCl)" stroke="#a8b4ba" stroke-width="0.8"/></svg>
<svg style="left:732px;top:108px" width="24" height="29" viewBox="0 0 24 29" ><path d="M7 5.7 H2 V23 H9" fill="none" stroke="#333" stroke-width="4" stroke-linejoin="round"/><path d="M14 5.7 H21.3 V23 H15.5" fill="none" stroke="#333" stroke-width="4" stroke-linejoin="round"/><path d="M6.5 0 L13.8 5.8 L6.5 11.5 Z" fill="#333"/><path d="M16 17.3 L8.6 23 L16 28.5 Z" fill="#333"/></svg>
<div style="left:4px;top:152px;width:673px;height:816px;background:#fff"></div>
<div style="left:677px;top:152px;width:8px;height:816px;background:#f0f0f0"></div>
<div style="left:685px;top:152px;width:107px;height:816px;background:#fff"></div>
<div style="left:792px;top:152px;width:8px;height:816px;background:#f0f0f0"></div>
<div style="left:800px;top:152px;width:658px;height:816px;background:#fff"></div>
<div style="left:4px;top:152px;width:672px;height:23px;background:linear-gradient(#ffffff,#f1f1f1)"></div>
<div style="left:685px;top:152px;width:106px;height:23px;background:linear-gradient(#ffffff,#f1f1f1)"></div>
<div style="left:800px;top:152px;width:657px;height:23px;background:linear-gradient(#ffffff,#f1f1f1)"></div>
<div style="left:24px;top:176px;width:652px;height:53px;background:#fff"></div>
<div style="left:801px;top:176px;width:657px;height:53px;background:#fff"></div>
<div style="left:475px;top:176px;width:1px;height:53px;background:#a0a0a0"></div>
<div style="left:1252px;top:176px;width:1px;height:53px;background:#a0a0a0"></div>
<div style="left:476px;top:193px;width:200px;height:1px;background:#f0f0f0"></div>
<div style="left:1253px;top:193px;width:205px;height:1px;background:#f0f0f0"></div>
<div style="left:476px;top:211px;width:200px;height:1px;background:#f0f0f0"></div>
<div style="left:1253px;top:211px;width:205px;height:1px;background:#f0f0f0"></div>
<div class="t" style="left:26px;top:176px;height:18px;line-height:18px;letter-spacing:0.616px;">backup\Realtek High Definition Audio</div>
<svg style="left:249px;top:177px" width="13" height="16"><use href="#iFolder"/></svg>
<div class="t" style="left:265px;top:176px;height:18px;line-height:18px;letter-spacing:0.395px;">hdxrt.inf_amd64_093f1ef0d88ed77b</div>
<div style="left:1022px;top:176px;width:22px;height:17px;background:linear-gradient(90deg,#c0ffc0 0,#c0ffc0 18.5px,rgba(192,255,192,0) 22px)"></div>
<svg style="left:1026px;top:177px" width="13" height="16"><use href="#iFolderG"/></svg>
<div style="left:1253px;top:176px;width:22px;height:17px;background:linear-gradient(90deg,#c0ffc0 0,#c0ffc0 18.5px,rgba(192,255,192,0) 22px)"></div>
<div style="left:1253px;top:194px;width:22px;height:17px;background:linear-gradient(90deg,#c0ffc0 0,#c0ffc0 18.5px,rgba(192,255,192,0) 22px)"></div>
<div style="left:1253px;top:212px;width:22px;height:17px;background:linear-gradient(90deg,#c0ffc0 0,#c0ffc0 18.5px,rgba(192,255,192,0) 22px)"></div>
<svg style="left:478px;top:177px" width="16" height="16"><use href="#iSpeaker"/></svg>
<div class="t" style="left:496px;top:176px;height:18px;line-height:18px;letter-spacing:0.143px;">RAVCpl64.exe</div>
<div class="t" style="left:521px;top:176px;height:18px;line-height:18px;letter-spacing:0.132px;width:154px;text-align:right">8,114,720</div>
<svg style="left:478px;top:195px" width="16" height="16"><use href="#iDoc"/></svg>
<div class="t" style="left:496px;top:194px;height:18px;line-height:18px;letter-spacing:-0.009px;">RTKVHD64.sys</div>
<div class="t" style="left:521px;top:194px;height:18px;line-height:18px;letter-spacing:0.132px;width:154px;text-align:right">2,001,056</div>
<svg style="left:478px;top:213px" width="16" height="16"><use href="#iCrab"/></svg>
<div class="t" style="left:496px;top:212px;height:18px;line-height:18px;letter-spacing:0.367px;">SkyTel.exe</div>
<div class="t" style="left:521px;top:212px;height:18px;line-height:18px;letter-spacing:0.132px;width:154px;text-align:right">1,833,504</div>
<div style="left:24px;top:230px;width:652px;height:17px;background:#f4f4f4"></div>
<div style="left:801px;top:230px;width:657px;height:17px;background:#f4f4f4"></div>
<div style="left:4px;top:229px;width:672px;height:1px;background:#a0a0a0"></div>
<div style="left:800px;top:229px;width:658px;height:1px;background:#a0a0a0"></div>
<div style="left:513px;top:230px;width:1px;height:17px;background:#a0a0a0"></div>
<div style="left:1327px;top:230px;width:1px;height:17px;background:#a0a0a0"></div>
<div class="t" style="left:26px;top:230px;height:18px;line-height:18px;letter-spacing:0.295px;">backup\Realtek PCIe GBE Family Cont...</div>
<svg style="left:263px;top:231px" width="13" height="16"><use href="#iFolder"/></svg>
<div class="t" style="left:279px;top:230px;height:18px;line-height:18px;letter-spacing:0.242px;">rt640x64.inf_amd64_7b936e058a61a631</div>
<div style="left:1073px;top:230px;width:22px;height:17px;background:linear-gradient(90deg,#c0ffc0 0,#c0ffc0 18.5px,rgba(192,255,192,0) 22px)"></div>
<svg style="left:1077px;top:231px" width="13" height="16"><use href="#iFolderG"/></svg>
<div style="left:1328px;top:230px;width:22px;height:17px;background:linear-gradient(90deg,#c0ffc0 0,#c0ffc0 18.5px,rgba(192,255,192,0) 22px)"></div>
<svg style="left:516px;top:231px" width="16" height="16"><use href="#iInf"/></svg>
<div class="t" style="left:534px;top:230px;height:18px;line-height:18px;letter-spacing:0.300px;">rt640x64.inf</div>
<div class="t" style="left:521px;top:230px;height:18px;line-height:18px;letter-spacing:0.132px;width:154px;text-align:right">1,827,072</div>
<div style="left:24px;top:248px;width:652px;height:53px;background:#fff"></div>
<div style="left:801px;top:248px;width:657px;height:53px;background:#fff"></div>
<div style="left:4px;top:247px;width:672px;height:1px;background:#a0a0a0"></div>
<div style="left:800px;top:247px;width:658px;height:1px;background:#a0a0a0"></div>
<div style="left:475px;top:248px;width:1px;height:53px;background:#a0a0a0"></div>
<div style="left:1252px;top:248px;width:1px;height:53px;background:#a0a0a0"></div>
<div style="left:476px;top:265px;width:200px;height:1px;background:#f0f0f0"></div>
<div style="left:1253px;top:265px;width:205px;height:1px;background:#f0f0f0"></div>
<div style="left:476px;top:283px;width:200px;height:1px;background:#f0f0f0"></div>
<div style="left:1253px;top:283px;width:205px;height:1px;background:#f0f0f0"></div>
<div class="t" style="left:26px;top:248px;height:18px;line-height:18px;letter-spacing:0.616px;">backup\Realtek High Definition Audio</div>
<svg style="left:249px;top:249px" width="13" height="16"><use href="#iFolder"/></svg>
<div class="t" style="left:265px;top:248px;height:18px;line-height:18px;letter-spacing:0.395px;">hdxrt.inf_amd64_093f1ef0d88ed77b</div>
<div style="left:1022px;top:248px;width:22px;height:17px;background:linear-gradient(90deg,#c0ffc0 0,#c0ffc0 18.5px,rgba(192,255,192,0) 22px)"></div>
<svg style="left:1026px;top:249px" width="13" height="16"><use href="#iFolderG"/></svg>
<div style="left:1253px;top:248px;width:22px;height:17px;background:linear-gradient(90deg,#c0ffc0 0,#c0ffc0 18.5px,rgba(192,255,192,0) 22px)"></div>
<div style="left:1253px;top:266px;width:22px;height:17px;background:linear-gradient(90deg,#c0ffc0 0,#c0ffc0 18.5px,rgba(192,255,192,0) 22px)"></div>
<div style="left:1253px;top:284px;width:22px;height:17px;background:linear-gradient(90deg,#c0ffc0 0,#c0ffc0 18.5px,rgba(192,255,192,0) 22px)"></div>
<svg style="left:478px;top:249px" width="16" height="16"><use href="#iCrab2"/></svg>
<div class="t" style="left:496px;top:248px;height:18px;line-height:18px;letter-spacing:0.295px;">RtlUpd64.exe</div>
<div class="t" style="left:521px;top:248px;height:18px;line-height:18px;letter-spacing:0.132px;width:154px;text-align:right">1,678,368</div>
<svg style="left:478px;top:267px" width="16" height="16"><use href="#iDoc"/></svg>
<div class="t" style="left:496px;top:266px;height:18px;line-height:18px;letter-spacing:0.122px;">RtkAPO64.dll</div>
<div class="t" style="left:521px;top:266px;height:18px;line-height:18px;letter-spacing:0.132px;width:154px;text-align:right">1,667,104</div>
<svg style="left:478px;top:285px" width="16" height="16"><use href="#iDoc"/></svg>
<div class="t" style="left:496px;top:284px;height:18px;line-height:18px;letter-spacing:0.203px;">RtPgEx64.dll</div>
<div class="t" style="left:521px;top:284px;height:18px;line-height:18px;letter-spacing:0.132px;width:154px;text-align:right">1,445,408</div>
<div style="left:24px;top:302px;width:652px;height:17px;background:#f4f4f4"></div>
<div style="left:801px;top:302px;width:657px;height:17px;background:#f4f4f4"></div>
<div style="left:4px;top:301px;width:672px;height:1px;background:#a0a0a0"></div>
<div style="left:800px;top:301px;width:658px;height:1px;background:#a0a0a0"></div>
<div style="left:504px;top:302px;width:1px;height:17px;background:#a0a0a0"></div>
<div style="left:1327px;top:302px;width:1px;height:17px;background:#a0a0a0"></div>
<div class="t" style="left:26px;top:302px;height:18px;line-height:18px;letter-spacing:0.286px;">backup\Realtek PCIe GBE Family Co...</div>
<svg style="left:254px;top:303px" width="13" height="16"><use href="#iFolder"/></svg>
<div class="t" style="left:270px;top:302px;height:18px;line-height:18px;letter-spacing:0.242px;">rt640x64.inf_amd64_7b936e058a61a631</div>
<div style="left:1073px;top:302px;width:22px;height:17px;background:linear-gradient(90deg,#c0ffc0 0,#c0ffc0 18.5px,rgba(192,255,192,0) 22px)"></div>
<svg style="left:1077px;top:303px" width="13" height="16"><use href="#iFolderG"/></svg>
<div style="left:1328px;top:302px;width:22px;height:17px;background:linear-gradient(90deg,#c0ffc0 0,#c0ffc0 18.5px,rgba(192,255,192,0) 22px)"></div>
<svg style="left:507px;top:303px" width="16" height="16"><use href="#iDoc"/></svg>
<div class="t" style="left:525px;top:302px;height:18px;line-height:18px;letter-spacing:0.078px;">rt640x64.PNF</div>
<div class="t" style="left:521px;top:302px;height:18px;line-height:18px;letter-spacing:0.132px;width:154px;text-align:right">1,318,756</div>
<div style="left:24px;top:320px;width:652px;height:35px;background:#fff"></div>
<div style="left:801px;top:320px;width:657px;height:35px;background:#fff"></div>
<div style="left:4px;top:319px;width:672px;height:1px;background:#a0a0a0"></div>
<div style="left:800px;top:319px;width:658px;height:1px;background:#a0a0a0"></div>
<div style="left:475px;top:320px;width:1px;height:35px;background:#a0a0a0"></div>
<div style="left:1252px;top:320px;width:1px;height:35px;background:#a0a0a0"></div>
<div style="left:476px;top:337px;width:200px;height:1px;background:#f0f0f0"></div>
<div style="left:1253px;top:337px;width:205px;height:1px;background:#f0f0f0"></div>
<div class="t" style="left:26px;top:320px;height:18px;line-height:18px;letter-spacing:0.616px;">backup\Realtek High Definition Audio</div>
<svg style="left:249px;top:321px" width="13" height="16"><use href="#iFolder"/></svg>
<div class="t" style="left:265px;top:320px;height:18px;line-height:18px;letter-spacing:0.395px;">hdxrt.inf_amd64_093f1ef0d88ed77b</div>
<div style="left:1022px;top:320px;width:22px;height:17px;background:linear-gradient(90deg,#c0ffc0 0,#c0ffc0 18.5px,rgba(192,255,192,0) 22px)"></div>
<svg style="left:1026px;top:321px" width="13" height="16"><use href="#iFolderG"/></svg>
<div style="left:1253px;top:320px;width:22px;height:17px;background:linear-gradient(90deg,#c0ffc0 0,#c0ffc0 18.5px,rgba(192,255,192,0) 22px)"></div>
<div style="left:1253px;top:338px;width:22px;height:17px;background:linear-gradient(90deg,#c0ffc0 0,#c0ffc0 18.5px,rgba(192,255,192,0) 22px)"></div>
<svg style="left:478px;top:321px" width="16" height="16"><use href="#iDoc"/></svg>
<div class="t" style="left:496px;top:320px;height:18px;line-height:18px;letter-spacing:0.003px;">RTCOM64.dll</div>
<div class="t" style="left:521px;top:320px;height:18px;line-height:18px;letter-spacing:0.132px;width:154px;text-align:right">1,178,656</div>
<svg style="left:478px;top:339px" width="16" height="16"><use href="#iDoc"/></svg>
<div class="t" style="left:496px;top:338px;height:18px;line-height:18px;letter-spacing:-0.102px;">RTCOMDLL.dll</div>
<div class="t" style="left:521px;top:338px;height:18px;line-height:18px;letter-spacing:0.132px;width:154px;text-align:right">1,051,168</div>
<div style="left:24px;top:356px;width:652px;height:35px;background:#f4f4f4"></div>
<div style="left:801px;top:356px;width:657px;height:35px;background:#f4f4f4"></div>
<div style="left:4px;top:355px;width:672px;height:1px;background:#a0a0a0"></div>
<div style="left:800px;top:355px;width:658px;height:1px;background:#a0a0a0"></div>
<div style="left:321px;top:356px;width:1px;height:35px;background:#a0a0a0"></div>
<div style="left:1327px;top:356px;width:1px;height:35px;background:#a0a0a0"></div>
<div style="left:322px;top:373px;width:354px;height:1px;background:#f0f0f0"></div>
<div style="left:1328px;top:373px;width:130px;height:1px;background:#f0f0f0"></div>
<svg style="left:72px;top:357px" width="13" height="16"><use href="#iFolder"/></svg>
<div class="t" style="left:88px;top:356px;height:18px;line-height:18px;letter-spacing:0.242px;">rt640x64.inf_amd64_7b936e058a61a631</div>
<div class="t" style="left:26px;top:374px;height:18px;line-height:18px;letter-spacing:0.375px;">backup\Realtek PCIe GBE Family Controller #2\...</div>
<div style="left:1073px;top:356px;width:22px;height:17px;background:linear-gradient(90deg,#c0ffc0 0,#c0ffc0 18.5px,rgba(192,255,192,0) 22px)"></div>
<svg style="left:1077px;top:357px" width="13" height="16"><use href="#iFolderG"/></svg>
<div style="left:1328px;top:356px;width:22px;height:17px;background:linear-gradient(90deg,#c0ffc0 0,#c0ffc0 18.5px,rgba(192,255,192,0) 22px)"></div>
<div style="left:1328px;top:374px;width:22px;height:17px;background:linear-gradient(90deg,#c0ffc0 0,#c0ffc0 18.5px,rgba(192,255,192,0) 22px)"></div>
<svg style="left:324px;top:357px" width="16" height="16"><use href="#iDoc"/></svg>
<div class="t" style="left:342px;top:356px;height:18px;line-height:18px;letter-spacing:0.322px;">rt640x64.sys</div>
<div class="t" style="left:521px;top:356px;height:18px;line-height:18px;letter-spacing:0.102px;width:154px;text-align:right">937,728</div>
<svg style="left:324px;top:375px" width="16" height="16"><use href="#iCat"/></svg>
<div class="t" style="left:342px;top:374px;height:18px;line-height:18px;letter-spacing:0.311px;">rt640x64.cat</div>
<div class="t" style="left:521px;top:374px;height:18px;line-height:18px;letter-spacing:0.102px;width:154px;text-align:right">936,325</div>
<div style="left:24px;top:392px;width:652px;height:359px;background:#fff"></div>
<div style="left:801px;top:392px;width:657px;height:359px;background:#fff"></div>
<div style="left:4px;top:391px;width:672px;height:1px;background:#a0a0a0"></div>
<div style="left:800px;top:391px;width:658px;height:1px;background:#a0a0a0"></div>
<div style="left:475px;top:392px;width:1px;height:359px;background:#a0a0a0"></div>
<div style="left:1252px;top:392px;width:1px;height:359px;background:#a0a0a0"></div>
<div style="left:476px;top:409px;width:200px;height:1px;background:#f0f0f0"></div>
<div style="left:1253px;top:409px;width:205px;height:1px;background:#f0f0f0"></div>
<div style="left:476px;top:427px;width:200px;height:1px;background:#f0f0f0"></div>
<div style="left:1253px;top:427px;width:205px;height:1px;background:#f0f0f0"></div>
<div style="left:476px;top:445px;width:200px;height:1px;background:#f0f0f0"></div>
<div style="left:1253px;top:445px;width:205px;height:1px;background:#f0f0f0"></div>
<div style="left:476px;top:463px;width:200px;height:1px;background:#f0f0f0"></div>
<div style="left:1253px;top:463px;width:205px;height:1px;background:#f0f0f0"></div>
<div style="left:476px;top:481px;width:200px;height:1px;background:#f0f0f0"></div>
<div style="left:1253px;top:481px;width:205px;height:1px;background:#f0f0f0"></div>
<div style="left:476px;top:499px;width:200px;height:1px;background:#f0f0f0"></div>
<div style="left:1253px;top:499px;width:205px;height:1px;background:#f0f0f0"></div>
<div style="left:476px;top:517px;width:200px;height:1px;background:#f0f0f0"></div>
<div style="left:1253px;top:517px;width:205px;height:1px;background:#f0f0f0"></div>
<div style="left:476px;top:535px;width:200px;height:1px;background:#f0f0f0"></div>
<div style="left:1253px;top:535px;width:205px;height:1px;background:#f0f0f0"></div>
<div style="left:476px;top:553px;width:200px;height:1px;background:#f0f0f0"></div>
<div style="left:1253px;top:553px;width:205px;height:1px;background:#f0f0f0"></div>
<div style="left:476px;top:571px;width:200px;height:1px;background:#f0f0f0"></div>
<div style="left:1253px;top:571px;width:205px;height:1px;background:#f0f0f0"></div>
<div style="left:476px;top:589px;width:200px;height:1px;background:#f0f0f0"></div>
<div style="left:1253px;top:589px;width:205px;height:1px;background:#f0f0f0"></div>
<div style="left:476px;top:607px;width:200px;height:1px;background:#f0f0f0"></div>
<div style="left:1253px;top:607px;width:205px;height:1px;background:#f0f0f0"></div>
<div style="left:476px;top:625px;width:200px;height:1px;background:#f0f0f0"></div>
<div style="left:1253px;top:625px;width:205px;height:1px;background:#f0f0f0"></div>
<div style="left:476px;top:643px;width:200px;height:1px;background:#f0f0f0"></div>
<div style="left:1253px;top:643px;width:205px;height:1px;background:#f0f0f0"></div>
<div style="left:476px;top:661px;width:200px;height:1px;background:#f0f0f0"></div>
<div style="left:1253px;top:661px;width:205px;height:1px;background:#f0f0f0"></div>
<div style="left:476px;top:679px;width:200px;height:1px;background:#f0f0f0"></div>
<div style="left:1253px;top:679px;width:205px;height:1px;background:#f0f0f0"></div>
<div style="left:476px;top:697px;width:200px;height:1px;background:#f0f0f0"></div>
<div style="left:1253px;top:697px;width:205px;height:1px;background:#f0f0f0"></div>
<div style="left:476px;top:715px;width:200px;height:1px;background:#f0f0f0"></div>
<div style="left:1253px;top:715px;width:205px;height:1px;background:#f0f0f0"></div>
<div style="left:476px;top:733px;width:200px;height:1px;background:#f0f0f0"></div>
<div style="left:1253px;top:733px;width:205px;height:1px;background:#f0f0f0"></div>
<div class="t" style="left:26px;top:392px;height:18px;line-height:18px;letter-spacing:0.616px;">backup\Realtek High Definition Audio</div>
<svg style="left:249px;top:393px" width="13" height="16"><use href="#iFolder"/></svg>
<div class="t" style="left:265px;top:392px;height:18px;line-height:18px;letter-spacing:0.395px;">hdxrt.inf_amd64_093f1ef0d88ed77b</div>
<div style="left:1022px;top:392px;width:22px;height:17px;background:linear-gradient(90deg,#c0ffc0 0,#c0ffc0 18.5px,rgba(192,255,192,0) 22px)"></div>
<svg style="left:1026px;top:393px" width="13" height="16"><use href="#iFolderG"/></svg>
<div style="left:1253px;top:392px;width:22px;height:17px;background:linear-gradient(90deg,#c0ffc0 0,#c0ffc0 18.5px,rgba(192,255,192,0) 22px)"></div>
<div style="left:1253px;top:410px;width:22px;height:17px;background:linear-gradient(90deg,#c0ffc0 0,#c0ffc0 18.5px,rgba(192,255,192,0) 22px)"></div>
<div style="left:1253px;top:428px;width:22px;height:17px;background:linear-gradient(90deg,#c0ffc0 0,#c0ffc0 18.5px,rgba(192,255,192,0) 22px)"></div>
<div style="left:1253px;top:446px;width:22px;height:17px;background:linear-gradient(90deg,#c0ffc0 0,#c0ffc0 18.5px,rgba(192,255,192,0) 22px)"></div>
<div style="left:1253px;top:464px;width:22px;height:17px;background:linear-gradient(90deg,#c0ffc0 0,#c0ffc0 18.5px,rgba(192,255,192,0) 22px)"></div>
<div style="left:1253px;top:482px;width:22px;height:17px;background:linear-gradient(90deg,#c0ffc0 0,#c0ffc0 18.5px,rgba(192,255,192,0) 22px)"></div>
<div style="left:1253px;top:500px;width:22px;height:17px;background:linear-gradient(90deg,#c0ffc0 0,#c0ffc0 18.5px,rgba(192,255,192,0) 22px)"></div>
<div style="left:1253px;top:518px;width:22px;height:17px;background:linear-gradient(90deg,#c0ffc0 0,#c0ffc0 18.5px,rgba(192,255,192,0) 22px)"></div>
<div style="left:1253px;top:536px;width:22px;height:17px;background:linear-gradient(90deg,#c0ffc0 0,#c0ffc0 18.5px,rgba(192,255,192,0) 22px)"></div>
<div style="left:1253px;top:554px;width:22px;height:17px;background:linear-gradient(90deg,#c0ffc0 0,#c0ffc0 18.5px,rgba(192,255,192,0) 22px)"></div>
<div style="left:1253px;top:572px;width:22px;height:17px;background:linear-gradient(90deg,#c0ffc0 0,#c0ffc0 18.5px,rgba(192,255,192,0) 22px)"></div>
<div style="left:1253px;top:590px;width:22px;height:17px;background:linear-gradient(90deg,#c0ffc0 0,#c0ffc0 18.5px,rgba(192,255,192,0) 22px)"></div>
<div style="left:1253px;top:608px;width:22px;height:17px;background:linear-gradient(90deg,#c0ffc0 0,#c0ffc0 18.5px,rgba(192,255,192,0) 22px)"></div>
<div style="left:1253px;top:626px;width:22px;height:17px;background:linear-gradient(90deg,#c0ffc0 0,#c0ffc0 18.5px,rgba(192,255,192,0) 22px)"></div>
<div style="left:1253px;top:644px;width:22px;height:17px;background:linear-gradient(90deg,#c0ffc0 0,#c0ffc0 18.5px,rgba(192,255,192,0) 22px)"></div>
<div style="left:1253px;top:662px;width:22px;height:17px;background:linear-gradient(90deg,#c0ffc0 0,#c0ffc0 18.5px,rgba(192,255,192,0) 22px)"></div>
<div style="left:1253px;top:680px;width:22px;height:17px;background:linear-gradient(90deg,#c0ffc0 0,#c0ffc0 18.5px,rgba(192,255,192,0) 22px)"></div>
<div style="left:1253px;top:698px;width:22px;height:17px;background:linear-gradient(90deg,#c0ffc0 0,#c0ffc0 18.5px,rgba(192,255,192,0) 22px)"></div>
<div style="left:1253px;top:716px;width:22px;height:17px;background:linear-gradient(90deg,#c0ffc0 0,#c0ffc0 18.5px,rgba(192,255,192,0) 22px)"></div>
<div style="left:1253px;top:734px;width:22px;height:17px;background:linear-gradient(90deg,#c0ffc0 0,#c0ffc0 18.5px,rgba(192,255,192,0) 22px)"></div>
<svg style="left:478px;top:393px" width="16" height="16"><use href="#iSpeaker"/></svg>
<div class="t" style="left:496px;top:392px;height:18px;line-height:18px;letter-spacing:0.116px;">RAVBg64.exe</div>
<div class="t" style="left:521px;top:392px;height:18px;line-height:18px;letter-spacing:0.102px;width:154px;text-align:right">863,264</div>
<svg style="left:478px;top:411px" width="16" height="16"><use href="#iCat"/></svg>
<div class="t" style="left:496px;top:410px;height:18px;line-height:18px;letter-spacing:-0.212px;">HDA64.CAT</div>
<div class="t" style="left:521px;top:410px;height:18px;line-height:18px;letter-spacing:0.102px;width:154px;text-align:right">779,772</div>
<svg style="left:478px;top:429px" width="16" height="16"><use href="#iDoc"/></svg>
<div class="t" style="left:496px;top:428px;height:18px;line-height:18px;letter-spacing:0.143px;">RTSnMg64.cpl</div>
<div class="t" style="left:521px;top:428px;height:18px;line-height:18px;letter-spacing:0.102px;width:154px;text-align:right">611,872</div>
<svg style="left:478px;top:447px" width="16" height="16"><use href="#iVnc"/></svg>
<div class="t" style="left:496px;top:446px;height:18px;line-height:18px;letter-spacing:0.454px;">vncutil64.exe</div>
<div class="t" style="left:521px;top:446px;height:18px;line-height:18px;letter-spacing:0.102px;width:154px;text-align:right">527,904</div>
<svg style="left:478px;top:465px" width="16" height="16"><use href="#iDoc"/></svg>
<div class="t" style="left:496px;top:464px;height:18px;line-height:18px;letter-spacing:-0.030px;">SRSTSX64.dll</div>
<div class="t" style="left:521px;top:464px;height:18px;line-height:18px;letter-spacing:0.102px;width:154px;text-align:right">519,976</div>
<svg style="left:478px;top:483px" width="16" height="16"><use href="#iDoc"/></svg>
<div class="t" style="left:496px;top:482px;height:18px;line-height:18px;letter-spacing:0.273px;">RtkApi64.dll</div>
<div class="t" style="left:521px;top:482px;height:18px;line-height:18px;letter-spacing:0.102px;width:154px;text-align:right">436,768</div>
<svg style="left:478px;top:501px" width="16" height="16"><use href="#iDoc"/></svg>
<div class="t" style="left:496px;top:500px;height:18px;line-height:18px;letter-spacing:-0.030px;">RTEEP64A.dll</div>
<div class="t" style="left:521px;top:500px;height:18px;line-height:18px;letter-spacing:0.102px;width:154px;text-align:right">369,448</div>
<svg style="left:478px;top:519px" width="16" height="16"><use href="#iDoc"/></svg>
<div class="t" style="left:496px;top:518px;height:18px;line-height:18px;letter-spacing:0.219px;">hdxrt.PNF</div>
<div class="t" style="left:521px;top:518px;height:18px;line-height:18px;letter-spacing:0.102px;width:154px;text-align:right">368,428</div>
<svg style="left:478px;top:537px" width="16" height="16"><use href="#iDoc"/></svg>
<div class="t" style="left:496px;top:536px;height:18px;line-height:18px;letter-spacing:0.098px;">RtlCPAPI64.dll</div>
<div class="t" style="left:521px;top:536px;height:18px;line-height:18px;letter-spacing:0.102px;width:154px;text-align:right">332,320</div>
<svg style="left:478px;top:555px" width="16" height="16"><use href="#iDoc"/></svg>
<div class="t" style="left:496px;top:554px;height:18px;line-height:18px;letter-spacing:0.217px;">MaxxAudioAPO...</div>
<div class="t" style="left:521px;top:554px;height:18px;line-height:18px;letter-spacing:0.102px;width:154px;text-align:right">326,952</div>
<svg style="left:478px;top:573px" width="16" height="16"><use href="#iDoc"/></svg>
<div class="t" style="left:496px;top:572px;height:18px;line-height:18px;letter-spacing:0.006px;">RP3DHT64.dll</div>
<div class="t" style="left:521px;top:572px;height:18px;line-height:18px;letter-spacing:0.102px;width:154px;text-align:right">311,080</div>
<svg style="left:478px;top:591px" width="16" height="16"><use href="#iDoc"/></svg>
<div class="t" style="left:496px;top:590px;height:18px;line-height:18px;letter-spacing:0.006px;">RP3DAA64.dll</div>
<div class="t" style="left:521px;top:590px;height:18px;line-height:18px;letter-spacing:0.102px;width:154px;text-align:right">311,080</div>
<svg style="left:478px;top:609px" width="16" height="16"><use href="#iDoc"/></svg>
<div class="t" style="left:496px;top:608px;height:18px;line-height:18px;letter-spacing:0.003px;">FMAPO64.dll</div>
<div class="t" style="left:521px;top:608px;height:18px;line-height:18px;letter-spacing:0.102px;width:154px;text-align:right">301,352</div>
<svg style="left:478px;top:627px" width="16" height="16"><use href="#iDoc"/></svg>
<div class="t" style="left:496px;top:626px;height:18px;line-height:18px;letter-spacing:-0.030px;">SRSTSH64.dll</div>
<div class="t" style="left:521px;top:626px;height:18px;line-height:18px;letter-spacing:0.102px;width:154px;text-align:right">211,376</div>
<svg style="left:478px;top:645px" width="16" height="16"><use href="#iDoc"/></svg>
<div class="t" style="left:496px;top:644px;height:18px;line-height:18px;letter-spacing:-0.030px;">RTEED64A.dll</div>
<div class="t" style="left:521px;top:644px;height:18px;line-height:18px;letter-spacing:0.102px;width:154px;text-align:right">205,096</div>
<svg style="left:478px;top:663px" width="16" height="16"><use href="#iDoc"/></svg>
<div class="t" style="left:496px;top:662px;height:18px;line-height:18px;letter-spacing:0.003px;">SRSHP64.dll</div>
<div class="t" style="left:521px;top:662px;height:18px;line-height:18px;letter-spacing:0.102px;width:154px;text-align:right">199,976</div>
<svg style="left:478px;top:681px" width="16" height="16"><use href="#iWin"/></svg>
<div class="t" style="left:496px;top:680px;height:18px;line-height:18px;letter-spacing:0.357px;">RtkAudioService...</div>
<div class="t" style="left:521px;top:680px;height:18px;line-height:18px;letter-spacing:0.102px;width:154px;text-align:right">190,496</div>
<svg style="left:478px;top:699px" width="16" height="16"><use href="#iDoc"/></svg>
<div class="t" style="left:496px;top:698px;height:18px;line-height:18px;letter-spacing:-0.030px;">AERTAC64.dll</div>
<div class="t" style="left:521px;top:698px;height:18px;line-height:18px;letter-spacing:0.102px;width:154px;text-align:right">172,840</div>
<svg style="left:478px;top:717px" width="16" height="16"><use href="#iInf"/></svg>
<div class="t" style="left:496px;top:716px;height:18px;line-height:18px;letter-spacing:0.094px;">HDA64.inf</div>
<div class="t" style="left:521px;top:716px;height:18px;line-height:18px;letter-spacing:0.102px;width:154px;text-align:right">170,197</div>
<svg style="left:478px;top:735px" width="16" height="16"><use href="#iDoc"/></svg>
<div class="t" style="left:496px;top:734px;height:18px;line-height:18px;letter-spacing:-0.030px;">SRSWOW64.dll</div>
<div class="t" style="left:521px;top:734px;height:18px;line-height:18px;letter-spacing:0.102px;width:154px;text-align:right">156,968</div>
<div style="left:24px;top:752px;width:652px;height:17px;background:#f4f4f4"></div>
<div style="left:801px;top:752px;width:657px;height:17px;background:#f4f4f4"></div>
<div style="left:4px;top:751px;width:672px;height:1px;background:#a0a0a0"></div>
<div style="left:800px;top:751px;width:658px;height:1px;background:#a0a0a0"></div>
<div style="left:438px;top:752px;width:1px;height:17px;background:#a0a0a0"></div>
<div style="left:1215px;top:752px;width:1px;height:17px;background:#a0a0a0"></div>
<div class="t" style="left:26px;top:752px;height:18px;line-height:18px;letter-spacing:0.350px;">backup\PCI 标准主机 CPU 桥</div>
<svg style="left:193px;top:753px" width="13" height="16"><use href="#iFolder"/></svg>
<div class="t" style="left:209px;top:752px;height:18px;line-height:18px;letter-spacing:0.264px;">machine.inf_amd64_fe9663909da73523</div>
<div style="left:966px;top:752px;width:22px;height:17px;background:linear-gradient(90deg,#c0ffc0 0,#c0ffc0 18.5px,rgba(192,255,192,0) 22px)"></div>
<svg style="left:970px;top:753px" width="13" height="16"><use href="#iFolderG"/></svg>
<div style="left:1216px;top:752px;width:22px;height:17px;background:linear-gradient(90deg,#c0ffc0 0,#c0ffc0 18.5px,rgba(192,255,192,0) 22px)"></div>
<svg style="left:441px;top:753px" width="16" height="16"><use href="#iDoc"/></svg>
<div class="t" style="left:459px;top:752px;height:18px;line-height:18px;letter-spacing:0.294px;">machine.PNF</div>
<div class="t" style="left:521px;top:752px;height:18px;line-height:18px;letter-spacing:0.102px;width:154px;text-align:right">152,580</div>
<div style="left:24px;top:770px;width:652px;height:17px;background:#fff"></div>
<div style="left:801px;top:770px;width:657px;height:17px;background:#fff"></div>
<div style="left:4px;top:769px;width:672px;height:1px;background:#a0a0a0"></div>
<div style="left:800px;top:769px;width:658px;height:1px;background:#a0a0a0"></div>
<div style="left:475px;top:770px;width:1px;height:17px;background:#a0a0a0"></div>
<div style="left:1252px;top:770px;width:1px;height:17px;background:#a0a0a0"></div>
<div class="t" style="left:26px;top:770px;height:18px;line-height:18px;letter-spacing:0.616px;">backup\Realtek High Definition Audio</div>
<svg style="left:249px;top:771px" width="13" height="16"><use href="#iFolder"/></svg>
<div class="t" style="left:265px;top:770px;height:18px;line-height:18px;letter-spacing:0.395px;">hdxrt.inf_amd64_093f1ef0d88ed77b</div>
<div style="left:1022px;top:770px;width:22px;height:17px;background:linear-gradient(90deg,#c0ffc0 0,#c0ffc0 18.5px,rgba(192,255,192,0) 22px)"></div>
<svg style="left:1026px;top:771px" width="13" height="16"><use href="#iFolderG"/></svg>
<div style="left:1253px;top:770px;width:22px;height:17px;background:linear-gradient(90deg,#c0ffc0 0,#c0ffc0 18.5px,rgba(192,255,192,0) 22px)"></div>
<svg style="left:478px;top:771px" width="16" height="16"><use href="#iDoc"/></svg>
<div class="t" style="left:496px;top:770px;height:18px;line-height:18px;letter-spacing:0.273px;">RtkCfg64.dll</div>
<div class="t" style="left:521px;top:770px;height:18px;line-height:18px;letter-spacing:0.102px;width:154px;text-align:right">149,536</div>
<div style="left:24px;top:788px;width:652px;height:17px;background:#f4f4f4"></div>
<div style="left:801px;top:788px;width:657px;height:17px;background:#f4f4f4"></div>
<div style="left:4px;top:787px;width:672px;height:1px;background:#a0a0a0"></div>
<div style="left:800px;top:787px;width:658px;height:1px;background:#a0a0a0"></div>
<div style="left:438px;top:788px;width:1px;height:17px;background:#a0a0a0"></div>
<div style="left:1215px;top:788px;width:1px;height:17px;background:#a0a0a0"></div>
<div class="t" style="left:26px;top:788px;height:18px;line-height:18px;letter-spacing:0.350px;">backup\PCI 标准主机 CPU 桥</div>
<svg style="left:193px;top:789px" width="13" height="16"><use href="#iFolder"/></svg>
<div class="t" style="left:209px;top:788px;height:18px;line-height:18px;letter-spacing:0.264px;">machine.inf_amd64_fe9663909da73523</div>
<div style="left:966px;top:788px;width:22px;height:17px;background:linear-gradient(90deg,#c0ffc0 0,#c0ffc0 18.5px,rgba(192,255,192,0) 22px)"></div>
<svg style="left:970px;top:789px" width="13" height="16"><use href="#iFolderG"/></svg>
<div style="left:1216px;top:788px;width:22px;height:17px;background:linear-gradient(90deg,#c0ffc0 0,#c0ffc0 18.5px,rgba(192,255,192,0) 22px)"></div>
<svg style="left:441px;top:789px" width="16" height="16"><use href="#iInf"/></svg>
<div class="t" style="left:459px;top:788px;height:18px;line-height:18px;letter-spacing:0.539px;">machine.inf</div>
<div class="t" style="left:521px;top:788px;height:18px;line-height:18px;letter-spacing:0.102px;width:154px;text-align:right">146,738</div>
<div style="left:24px;top:806px;width:652px;height:89px;background:#fff"></div>
<div style="left:801px;top:806px;width:657px;height:89px;background:#fff"></div>
<div style="left:4px;top:805px;width:672px;height:1px;background:#a0a0a0"></div>
<div style="left:800px;top:805px;width:658px;height:1px;background:#a0a0a0"></div>
<div style="left:475px;top:806px;width:1px;height:89px;background:#a0a0a0"></div>
<div style="left:1252px;top:806px;width:1px;height:89px;background:#a0a0a0"></div>
<div style="left:476px;top:823px;width:200px;height:1px;background:#f0f0f0"></div>
<div style="left:1253px;top:823px;width:205px;height:1px;background:#f0f0f0"></div>
<div style="left:476px;top:841px;width:200px;height:1px;background:#f0f0f0"></div>
<div style="left:1253px;top:841px;width:205px;height:1px;background:#f0f0f0"></div>
<div style="left:476px;top:859px;width:200px;height:1px;background:#f0f0f0"></div>
<div style="left:1253px;top:859px;width:205px;height:1px;background:#f0f0f0"></div>
<div style="left:476px;top:877px;width:200px;height:1px;background:#f0f0f0"></div>
<div style="left:1253px;top:877px;width:205px;height:1px;background:#f0f0f0"></div>
<div class="t" style="left:26px;top:806px;height:18px;line-height:18px;letter-spacing:0.616px;">backup\Realtek High Definition Audio</div>
<svg style="left:249px;top:807px" width="13" height="16"><use href="#iFolder"/></svg>
<div class="t" style="left:265px;top:806px;height:18px;line-height:18px;letter-spacing:0.395px;">hdxrt.inf_amd64_093f1ef0d88ed77b</div>
<div style="left:1022px;top:806px;width:22px;height:17px;background:linear-gradient(90deg,#c0ffc0 0,#c0ffc0 18.5px,rgba(192,255,192,0) 22px)"></div>
<svg style="left:1026px;top:807px" width="13" height="16"><use href="#iFolderG"/></svg>
<div style="left:1253px;top:806px;width:22px;height:17px;background:linear-gradient(90deg,#c0ffc0 0,#c0ffc0 18.5px,rgba(192,255,192,0) 22px)"></div>
<div style="left:1253px;top:824px;width:22px;height:17px;background:linear-gradient(90deg,#c0ffc0 0,#c0ffc0 18.5px,rgba(192,255,192,0) 22px)"></div>
<div style="left:1253px;top:842px;width:22px;height:17px;background:linear-gradient(90deg,#c0ffc0 0,#c0ffc0 18.5px,rgba(192,255,192,0) 22px)"></div>
<div style="left:1253px;top:860px;width:22px;height:17px;background:linear-gradient(90deg,#c0ffc0 0,#c0ffc0 18.5px,rgba(192,255,192,0) 22px)"></div>
<div style="left:1253px;top:878px;width:22px;height:17px;background:linear-gradient(90deg,#c0ffc0 0,#c0ffc0 18.5px,rgba(192,255,192,0) 22px)"></div>
<svg style="left:478px;top:807px" width="16" height="16"><use href="#iDoc"/></svg>
<div class="t" style="left:496px;top:806px;height:18px;line-height:18px;letter-spacing:0.327px;">RtkCfg.dll</div>
<div class="t" style="left:521px;top:806px;height:18px;line-height:18px;letter-spacing:0.102px;width:154px;text-align:right">141,856</div>
<svg style="left:478px;top:825px" width="16" height="16"><use href="#iDoc"/></svg>
<div class="t" style="left:496px;top:824px;height:18px;line-height:18px;letter-spacing:-0.032px;">RTLCPAPI.dll</div>
<div class="t" style="left:521px;top:824px;height:18px;line-height:18px;letter-spacing:0.102px;width:154px;text-align:right">137,760</div>
<svg style="left:478px;top:843px" width="16" height="16"><use href="#iDoc"/></svg>
<div class="t" style="left:496px;top:842px;height:18px;line-height:18px;letter-spacing:-0.030px;">AERTAR64.dll</div>
<div class="t" style="left:521px;top:842px;height:18px;line-height:18px;letter-spacing:0.102px;width:154px;text-align:right">114,472</div>
<svg style="left:478px;top:861px" width="16" height="16"><use href="#iDoc"/></svg>
<div class="t" style="left:496px;top:860px;height:18px;line-height:18px;letter-spacing:-0.030px;">RTEEL64A.dll</div>
<div class="t" style="left:521px;top:860px;height:18px;line-height:18px;letter-spacing:0.102px;width:154px;text-align:right">102,184</div>
<svg style="left:478px;top:879px" width="16" height="16"><use href="#iWin"/></svg>
<div class="t" style="left:496px;top:878px;height:18px;line-height:18px;letter-spacing:0.062px;">AERTSr64.exe</div>
<div class="t" style="left:521px;top:878px;height:18px;line-height:18px;letter-spacing:0.116px;width:154px;text-align:right">98,600</div>
<div style="left:24px;top:896px;width:652px;height:17px;background:#f4f4f4"></div>
<div style="left:801px;top:896px;width:657px;height:17px;background:#f4f4f4"></div>
<div style="left:4px;top:895px;width:672px;height:1px;background:#a0a0a0"></div>
<div style="left:800px;top:895px;width:658px;height:1px;background:#a0a0a0"></div>
<div style="left:490px;top:896px;width:1px;height:17px;background:#a0a0a0"></div>
<div style="left:1327px;top:896px;width:1px;height:17px;background:#a0a0a0"></div>
<div class="t" style="left:26px;top:896px;height:18px;line-height:18px;letter-spacing:0.274px;">backup\Realtek PCIe GBE Family ...</div>
<svg style="left:241px;top:897px" width="13" height="16"><use href="#iFolder"/></svg>
<div class="t" style="left:257px;top:896px;height:18px;line-height:18px;letter-spacing:0.242px;">rt640x64.inf_amd64_7b936e058a61a631</div>
<div style="left:1073px;top:896px;width:22px;height:17px;background:linear-gradient(90deg,#c0ffc0 0,#c0ffc0 18.5px,rgba(192,255,192,0) 22px)"></div>
<svg style="left:1077px;top:897px" width="13" height="16"><use href="#iFolderG"/></svg>
<div style="left:1328px;top:896px;width:22px;height:17px;background:linear-gradient(90deg,#c0ffc0 0,#c0ffc0 18.5px,rgba(192,255,192,0) 22px)"></div>
<svg style="left:493px;top:897px" width="16" height="16"><use href="#iDoc"/></svg>
<div class="t" style="left:511px;top:896px;height:18px;line-height:18px;letter-spacing:0.473px;">RtNicProp64.dll</div>
<div class="t" style="left:521px;top:896px;height:18px;line-height:18px;letter-spacing:0.116px;width:154px;text-align:right">91,272</div>
<div style="left:24px;top:914px;width:652px;height:35px;background:#fff"></div>
<div style="left:801px;top:914px;width:657px;height:35px;background:#fff"></div>
<div style="left:4px;top:913px;width:672px;height:1px;background:#a0a0a0"></div>
<div style="left:800px;top:913px;width:658px;height:1px;background:#a0a0a0"></div>
<div style="left:475px;top:914px;width:1px;height:35px;background:#a0a0a0"></div>
<div style="left:1252px;top:914px;width:1px;height:35px;background:#a0a0a0"></div>
<div style="left:476px;top:931px;width:200px;height:1px;background:#f0f0f0"></div>
<div style="left:1253px;top:931px;width:205px;height:1px;background:#f0f0f0"></div>
<div class="t" style="left:26px;top:914px;height:18px;line-height:18px;letter-spacing:0.616px;">backup\Realtek High Definition Audio</div>
<svg style="left:249px;top:915px" width="13" height="16"><use href="#iFolder"/></svg>
<div class="t" style="left:265px;top:914px;height:18px;line-height:18px;letter-spacing:0.395px;">hdxrt.inf_amd64_093f1ef0d88ed77b</div>
<div style="left:1022px;top:914px;width:22px;height:17px;background:linear-gradient(90deg,#c0ffc0 0,#c0ffc0 18.5px,rgba(192,255,192,0) 22px)"></div>
<svg style="left:1026px;top:915px" width="13" height="16"><use href="#iFolderG"/></svg>
<div style="left:1253px;top:914px;width:22px;height:17px;background:linear-gradient(90deg,#c0ffc0 0,#c0ffc0 18.5px,rgba(192,255,192,0) 22px)"></div>
<div style="left:1253px;top:932px;width:22px;height:17px;background:linear-gradient(90deg,#c0ffc0 0,#c0ffc0 18.5px,rgba(192,255,192,0) 22px)"></div>
<svg style="left:478px;top:915px" width="16" height="16"><use href="#iDoc"/></svg>
<div class="t" style="left:496px;top:914px;height:18px;line-height:18px;letter-spacing:-0.030px;">RTEEG64A.dll</div>
<div class="t" style="left:521px;top:914px;height:18px;line-height:18px;letter-spacing:0.116px;width:154px;text-align:right">79,656</div>
<svg style="left:478px;top:933px" width="16" height="16"><use href="#iDoc"/></svg>
<div class="t" style="left:496px;top:932px;height:18px;line-height:18px;letter-spacing:0.295px;">RCoInst64.dll</div>
<div class="t" style="left:521px;top:932px;height:18px;line-height:18px;letter-spacing:0.116px;width:154px;text-align:right">64,032</div>
<div style="left:24px;top:950px;width:652px;height:17px;background:#f4f4f4"></div>
<div style="left:801px;top:950px;width:657px;height:17px;background:#f4f4f4"></div>
<div style="left:4px;top:949px;width:672px;height:1px;background:#a0a0a0"></div>
<div style="left:800px;top:949px;width:658px;height:1px;background:#a0a0a0"></div>
<div style="left:438px;top:950px;width:1px;height:17px;background:#a0a0a0"></div>
<div style="left:1215px;top:950px;width:1px;height:17px;background:#a0a0a0"></div>
<div class="t" style="left:26px;top:950px;height:18px;line-height:18px;letter-spacing:0.350px;">backup\PCI 标准主机 CPU 桥</div>
<svg style="left:193px;top:951px" width="13" height="16"><use href="#iFolder"/></svg>
<div class="t" style="left:209px;top:950px;height:18px;line-height:18px;letter-spacing:0.264px;">machine.inf_amd64_fe9663909da73523</div>
<div style="left:966px;top:950px;width:22px;height:17px;background:linear-gradient(90deg,#c0ffc0 0,#c0ffc0 18.5px,rgba(192,255,192,0) 22px)"></div>
<svg style="left:970px;top:951px" width="13" height="16"><use href="#iFolderG"/></svg>
<div style="left:1216px;top:950px;width:22px;height:17px;background:linear-gradient(90deg,#c0ffc0 0,#c0ffc0 18.5px,rgba(192,255,192,0) 22px)"></div>
<svg style="left:441px;top:951px" width="16" height="16"><use href="#iDoc"/></svg>
<div class="t" style="left:459px;top:950px;height:18px;line-height:18px;letter-spacing:0.201px;">isapnp.sys</div>
<div class="t" style="left:521px;top:950px;height:18px;line-height:18px;letter-spacing:0.116px;width:154px;text-align:right">23,352</div>
<div style="left:5px;top:176px;width:18px;height:17px;background:linear-gradient(#fbfbfb,#f0f0f0)"></div>
<div style="left:4px;top:193px;width:20px;height:1px;background:#a0a0a0"></div>
<div class="t" style="left:5px;top:176px;height:18px;line-height:18px;letter-spacing:0.033px;width:18px;text-align:center;letter-spacing:0">1</div>
<div style="left:5px;top:194px;width:18px;height:17px;background:linear-gradient(#fbfbfb,#f0f0f0)"></div>
<div style="left:4px;top:211px;width:20px;height:1px;background:#a0a0a0"></div>
<div class="t" style="left:5px;top:194px;height:18px;line-height:18px;letter-spacing:0.033px;width:18px;text-align:center;letter-spacing:0">2</div>
<div style="left:5px;top:212px;width:18px;height:17px;background:linear-gradient(#fbfbfb,#f0f0f0)"></div>
<div style="left:4px;top:229px;width:20px;height:1px;background:#a0a0a0"></div>
<div class="t" style="left:5px;top:212px;height:18px;line-height:18px;letter-spacing:0.033px;width:18px;text-align:center;letter-spacing:0">3</div>
<div style="left:5px;top:230px;width:18px;height:17px;background:linear-gradient(#fbfbfb,#f0f0f0)"></div>
<div style="left:4px;top:247px;width:20px;height:1px;background:#a0a0a0"></div>
<div class="t" style="left:5px;top:230px;height:18px;line-height:18px;letter-spacing:0.033px;width:18px;text-align:center;letter-spacing:0">4</div>
<div style="left:5px;top:248px;width:18px;height:17px;background:linear-gradient(#fbfbfb,#f0f0f0)"></div>
<div style="left:4px;top:265px;width:20px;height:1px;background:#a0a0a0"></div>
<div class="t" style="left:5px;top:248px;height:18px;line-height:18px;letter-spacing:0.033px;width:18px;text-align:center;letter-spacing:0">5</div>
<div style="left:5px;top:266px;width:18px;height:17px;background:linear-gradient(#fbfbfb,#f0f0f0)"></div>
<div style="left:4px;top:283px;width:20px;height:1px;background:#a0a0a0"></div>
<div class="t" style="left:5px;top:266px;height:18px;line-height:18px;letter-spacing:0.033px;width:18px;text-align:center;letter-spacing:0">6</div>
<div style="left:5px;top:284px;width:18px;height:17px;background:linear-gradient(#fbfbfb,#f0f0f0)"></div>
<div style="left:4px;top:301px;width:20px;height:1px;background:#a0a0a0"></div>
<div class="t" style="left:5px;top:284px;height:18px;line-height:18px;letter-spacing:0.033px;width:18px;text-align:center;letter-spacing:0">7</div>
<div style="left:5px;top:302px;width:18px;height:17px;background:linear-gradient(#fbfbfb,#f0f0f0)"></div>
<div style="left:4px;top:319px;width:20px;height:1px;background:#a0a0a0"></div>
<div class="t" style="left:5px;top:302px;height:18px;line-height:18px;letter-spacing:0.033px;width:18px;text-align:center;letter-spacing:0">8</div>
<div style="left:5px;top:320px;width:18px;height:17px;background:linear-gradient(#fbfbfb,#f0f0f0)"></div>
<div style="left:4px;top:337px;width:20px;height:1px;background:#a0a0a0"></div>
<div class="t" style="left:5px;top:320px;height:18px;line-height:18px;letter-spacing:0.033px;width:18px;text-align:center;letter-spacing:0">9</div>
<div style="left:5px;top:338px;width:18px;height:17px;background:linear-gradient(#fbfbfb,#f0f0f0)"></div>
<div style="left:4px;top:355px;width:20px;height:1px;background:#a0a0a0"></div>
<div class="t" style="left:5px;top:338px;height:18px;line-height:18px;letter-spacing:0.066px;width:18px;text-align:center;letter-spacing:0">10</div>
<div style="left:5px;top:356px;width:18px;height:17px;background:linear-gradient(#fbfbfb,#f0f0f0)"></div>
<div style="left:4px;top:373px;width:20px;height:1px;background:#a0a0a0"></div>
<div class="t" style="left:5px;top:356px;height:18px;line-height:18px;letter-spacing:0.066px;width:18px;text-align:center;letter-spacing:0">11</div>
<div style="left:5px;top:374px;width:18px;height:17px;background:linear-gradient(#fbfbfb,#f0f0f0)"></div>
<div style="left:4px;top:391px;width:20px;height:1px;background:#a0a0a0"></div>
<div class="t" style="left:5px;top:374px;height:18px;line-height:18px;letter-spacing:0.066px;width:18px;text-align:center;letter-spacing:0">12</div>
<div style="left:5px;top:392px;width:18px;height:17px;background:linear-gradient(#fbfbfb,#f0f0f0)"></div>
<div style="left:4px;top:409px;width:20px;height:1px;background:#a0a0a0"></div>
<div class="t" style="left:5px;top:392px;height:18px;line-height:18px;letter-spacing:0.066px;width:18px;text-align:center;letter-spacing:0">13</div>
<div style="left:5px;top:410px;width:18px;height:17px;background:linear-gradient(#fbfbfb,#f0f0f0)"></div>
<div style="left:4px;top:427px;width:20px;height:1px;background:#a0a0a0"></div>
<div class="t" style="left:5px;top:410px;height:18px;line-height:18px;letter-spacing:0.066px;width:18px;text-align:center;letter-spacing:0">14</div>
<div style="left:5px;top:428px;width:18px;height:17px;background:linear-gradient(#fbfbfb,#f0f0f0)"></div>
<div style="left:4px;top:445px;width:20px;height:1px;background:#a0a0a0"></div>
<div class="t" style="left:5px;top:428px;height:18px;line-height:18px;letter-spacing:0.066px;width:18px;text-align:center;letter-spacing:0">15</div>
<div style="left:5px;top:446px;width:18px;height:17px;background:linear-gradient(#fbfbfb,#f0f0f0)"></div>
<div style="left:4px;top:463px;width:20px;height:1px;background:#a0a0a0"></div>
<div class="t" style="left:5px;top:446px;height:18px;line-height:18px;letter-spacing:0.066px;width:18px;text-align:center;letter-spacing:0">16</div>
<div style="left:5px;top:464px;width:18px;height:17px;background:linear-gradient(#fbfbfb,#f0f0f0)"></div>
<div style="left:4px;top:481px;width:20px;height:1px;background:#a0a0a0"></div>
<div class="t" style="left:5px;top:464px;height:18px;line-height:18px;letter-spacing:0.066px;width:18px;text-align:center;letter-spacing:0">17</div>
<div style="left:5px;top:482px;width:18px;height:17px;background:linear-gradient(#fbfbfb,#f0f0f0)"></div>
<div style="left:4px;top:499px;width:20px;height:1px;background:#a0a0a0"></div>
<div class="t" style="left:5px;top:482px;height:18px;line-height:18px;letter-spacing:0.066px;width:18px;text-align:center;letter-spacing:0">18</div>
<div style="left:5px;top:500px;width:18px;height:17px;background:linear-gradient(#fbfbfb,#f0f0f0)"></div>
<div style="left:4px;top:517px;width:20px;height:1px;background:#a0a0a0"></div>
<div class="t" style="left:5px;top:500px;height:18px;line-height:18px;letter-spacing:0.066px;width:18px;text-align:center;letter-spacing:0">19</div>
<div style="left:5px;top:518px;width:18px;height:17px;background:linear-gradient(#fbfbfb,#f0f0f0)"></div>
<div style="left:4px;top:535px;width:20px;height:1px;background:#a0a0a0"></div>
<div class="t" style="left:5px;top:518px;height:18px;line-height:18px;letter-spacing:0.066px;width:18px;text-align:center;letter-spacing:0">20</div>
<div style="left:5px;top:536px;width:18px;height:17px;background:linear-gradient(#fbfbfb,#f0f0f0)"></div>
<div style="left:4px;top:553px;width:20px;height:1px;background:#a0a0a0"></div>
<div class="t" style="left:5px;top:536px;height:18px;line-height:18px;letter-spacing:0.066px;width:18px;text-align:center;letter-spacing:0">21</div>
<div style="left:5px;top:554px;width:18px;height:17px;background:linear-gradient(#fbfbfb,#f0f0f0)"></div>
<div style="left:4px;top:571px;width:20px;height:1px;background:#a0a0a0"></div>
<div class="t" style="left:5px;top:554px;height:18px;line-height:18px;letter-spacing:0.066px;width:18px;text-align:center;letter-spacing:0">22</div>
<div style="left:5px;top:572px;width:18px;height:17px;background:linear-gradient(#fbfbfb,#f0f0f0)"></div>
<div style="left:4px;top:589px;width:20px;height:1px;background:#a0a0a0"></div>
<div class="t" style="left:5px;top:572px;height:18px;line-height:18px;letter-spacing:0.066px;width:18px;text-align:center;letter-spacing:0">23</div>
<div style="left:5px;top:590px;width:18px;height:17px;background:linear-gradient(#fbfbfb,#f0f0f0)"></div>
<div style="left:4px;top:607px;width:20px;height:1px;background:#a0a0a0"></div>
<div class="t" style="left:5px;top:590px;height:18px;line-height:18px;letter-spacing:0.066px;width:18px;text-align:center;letter-spacing:0">24</div>
<div style="left:5px;top:608px;width:18px;height:17px;background:linear-gradient(#fbfbfb,#f0f0f0)"></div>
<div style="left:4px;top:625px;width:20px;height:1px;background:#a0a0a0"></div>
<div class="t" style="left:5px;top:608px;height:18px;line-height:18px;letter-spacing:0.066px;width:18px;text-align:center;letter-spacing:0">25</div>
<div style="left:5px;top:626px;width:18px;height:17px;background:linear-gradient(#fbfbfb,#f0f0f0)"></div>
<div style="left:4px;top:643px;width:20px;height:1px;background:#a0a0a0"></div>
<div class="t" style="left:5px;top:626px;height:18px;line-height:18px;letter-spacing:0.066px;width:18px;text-align:center;letter-spacing:0">26</div>
<div style="left:5px;top:644px;width:18px;height:17px;background:linear-gradient(#fbfbfb,#f0f0f0)"></div>
<div style="left:4px;top:661px;width:20px;height:1px;background:#a0a0a0"></div>
<div class="t" style="left:5px;top:644px;height:18px;line-height:18px;letter-spacing:0.066px;width:18px;text-align:center;letter-spacing:0">27</div>
<div style="left:5px;top:662px;width:18px;height:17px;background:linear-gradient(#fbfbfb,#f0f0f0)"></div>
<div style="left:4px;top:679px;width:20px;height:1px;background:#a0a0a0"></div>
<div class="t" style="left:5px;top:662px;height:18px;line-height:18px;letter-spacing:0.066px;width:18px;text-align:center;letter-spacing:0">28</div>
<div style="left:5px;top:680px;width:18px;height:17px;background:linear-gradient(#fbfbfb,#f0f0f0)"></div>
<div style="left:4px;top:697px;width:20px;height:1px;background:#a0a0a0"></div>
<div class="t" style="left:5px;top:680px;height:18px;line-height:18px;letter-spacing:0.066px;width:18px;text-align:center;letter-spacing:0">29</div>
<div style="left:5px;top:698px;width:18px;height:17px;background:linear-gradient(#fbfbfb,#f0f0f0)"></div>
<div style="left:4px;top:715px;width:20px;height:1px;background:#a0a0a0"></div>
<div class="t" style="left:5px;top:698px;height:18px;line-height:18px;letter-spacing:0.066px;width:18px;text-align:center;letter-spacing:0">30</div>
<div style="left:5px;top:716px;width:18px;height:17px;background:linear-gradient(#fbfbfb,#f0f0f0)"></div>
<div style="left:4px;top:733px;width:20px;height:1px;background:#a0a0a0"></div>
<div class="t" style="left:5px;top:716px;height:18px;line-height:18px;letter-spacing:0.066px;width:18px;text-align:center;letter-spacing:0">31</div>
<div style="left:5px;top:734px;width:18px;height:17px;background:linear-gradient(#fbfbfb,#f0f0f0)"></div>
<div style="left:4px;top:751px;width:20px;height:1px;background:#a0a0a0"></div>
<div class="t" style="left:5px;top:734px;height:18px;line-height:18px;letter-spacing:0.066px;width:18px;text-align:center;letter-spacing:0">32</div>
<div style="left:5px;top:752px;width:18px;height:17px;background:linear-gradient(#fbfbfb,#f0f0f0)"></div>
<div style="left:4px;top:769px;width:20px;height:1px;background:#a0a0a0"></div>
<div class="t" style="left:5px;top:752px;height:18px;line-height:18px;letter-spacing:0.066px;width:18px;text-align:center;letter-spacing:0">33</div>
<div style="left:5px;top:770px;width:18px;height:17px;background:linear-gradient(#fbfbfb,#f0f0f0)"></div>
<div style="left:4px;top:787px;width:20px;height:1px;background:#a0a0a0"></div>
<div class="t" style="left:5px;top:770px;height:18px;line-height:18px;letter-spacing:0.066px;width:18px;text-align:center;letter-spacing:0">34</div>
<div style="left:5px;top:788px;width:18px;height:17px;background:linear-gradient(#fbfbfb,#f0f0f0)"></div>
<div style="left:4px;top:805px;width:20px;height:1px;background:#a0a0a0"></div>
<div class="t" style="left:5px;top:788px;height:18px;line-height:18px;letter-spacing:0.066px;width:18px;text-align:center;letter-spacing:0">35</div>
<div style="left:5px;top:806px;width:18px;height:17px;background:linear-gradient(#fbfbfb,#f0f0f0)"></div>
<div style="left:4px;top:823px;width:20px;height:1px;background:#a0a0a0"></div>
<div class="t" style="left:5px;top:806px;height:18px;line-height:18px;letter-spacing:0.066px;width:18px;text-align:center;letter-spacing:0">36</div>
<div style="left:5px;top:824px;width:18px;height:17px;background:linear-gradient(#fbfbfb,#f0f0f0)"></div>
<div style="left:4px;top:841px;width:20px;height:1px;background:#a0a0a0"></div>
<div class="t" style="left:5px;top:824px;height:18px;line-height:18px;letter-spacing:0.066px;width:18px;text-align:center;letter-spacing:0">37</div>
<div style="left:5px;top:842px;width:18px;height:17px;background:linear-gradient(#fbfbfb,#f0f0f0)"></div>
<div style="left:4px;top:859px;width:20px;height:1px;background:#a0a0a0"></div>
<div class="t" style="left:5px;top:842px;height:18px;line-height:18px;letter-spacing:0.066px;width:18px;text-align:center;letter-spacing:0">38</div>
<div style="left:5px;top:860px;width:18px;height:17px;background:linear-gradient(#fbfbfb,#f0f0f0)"></div>
<div style="left:4px;top:877px;width:20px;height:1px;background:#a0a0a0"></div>
<div class="t" style="left:5px;top:860px;height:18px;line-height:18px;letter-spacing:0.066px;width:18px;text-align:center;letter-spacing:0">39</div>
<div style="left:5px;top:878px;width:18px;height:17px;background:linear-gradient(#fbfbfb,#f0f0f0)"></div>
<div style="left:4px;top:895px;width:20px;height:1px;background:#a0a0a0"></div>
<div class="t" style="left:5px;top:878px;height:18px;line-height:18px;letter-spacing:0.066px;width:18px;text-align:center;letter-spacing:0">40</div>
<div style="left:5px;top:896px;width:18px;height:17px;background:linear-gradient(#fbfbfb,#f0f0f0)"></div>
<div style="left:4px;top:913px;width:20px;height:1px;background:#a0a0a0"></div>
<div class="t" style="left:5px;top:896px;height:18px;line-height:18px;letter-spacing:0.066px;width:18px;text-align:center;letter-spacing:0">41</div>
<div style="left:5px;top:914px;width:18px;height:17px;background:linear-gradient(#fbfbfb,#f0f0f0)"></div>
<div style="left:4px;top:931px;width:20px;height:1px;background:#a0a0a0"></div>
<div class="t" style="left:5px;top:914px;height:18px;line-height:18px;letter-spacing:0.066px;width:18px;text-align:center;letter-spacing:0">42</div>
<div style="left:5px;top:932px;width:18px;height:17px;background:linear-gradient(#fbfbfb,#f0f0f0)"></div>
<div style="left:4px;top:949px;width:20px;height:1px;background:#a0a0a0"></div>
<div class="t" style="left:5px;top:932px;height:18px;line-height:18px;letter-spacing:0.066px;width:18px;text-align:center;letter-spacing:0">43</div>
<div style="left:5px;top:950px;width:18px;height:17px;background:linear-gradient(#fbfbfb,#f0f0f0)"></div>
<div style="left:4px;top:967px;width:20px;height:1px;background:#a0a0a0"></div>
<div class="t" style="left:5px;top:950px;height:18px;line-height:18px;letter-spacing:0.066px;width:18px;text-align:center;letter-spacing:0">44</div>
<div style="left:23px;top:175px;width:1px;height:793px;background:#a0a0a0"></div>
<div style="left:4px;top:175px;width:672px;height:1px;background:#a0a0a0"></div>
<div style="left:4px;top:967px;width:672px;height:1px;background:#a0a0a0"></div>
<div style="left:4px;top:152px;width:1px;height:816px;background:#a0a0a0"></div>
<div style="left:676px;top:152px;width:1px;height:816px;background:#a0a0a0"></div>
<div style="left:743px;top:176px;width:48px;height:18px;background:#c0ffc0"></div>
<svg style="left:688px;top:178px" width="13" height="13"><use href="#iCheck"/></svg>
<svg style="left:712px;top:176px" width="22" height="18"><use href="#iCatg"/></svg>
<svg style="left:755px;top:176px" width="24" height="18"><use href="#iAdd"/></svg>
<div style="left:743px;top:194px;width:48px;height:18px;background:#c0ffc0"></div>
<div style="left:686px;top:193px;width:56px;height:1px;background:#f0f0f0"></div>
<svg style="left:688px;top:196px" width="13" height="13"><use href="#iCheck"/></svg>
<svg style="left:712px;top:194px" width="22" height="18"><use href="#iCatg"/></svg>
<svg style="left:755px;top:194px" width="24" height="18"><use href="#iAdd"/></svg>
<div style="left:743px;top:212px;width:48px;height:18px;background:#c0ffc0"></div>
<div style="left:686px;top:211px;width:56px;height:1px;background:#f0f0f0"></div>
<svg style="left:688px;top:214px" width="13" height="13"><use href="#iCheck"/></svg>
<svg style="left:712px;top:212px" width="22" height="18"><use href="#iCatg"/></svg>
<svg style="left:755px;top:212px" width="24" height="18"><use href="#iAdd"/></svg>
<div style="left:743px;top:230px;width:48px;height:18px;background:#c0ffc0"></div>
<div style="left:686px;top:229px;width:56px;height:1px;background:#f0f0f0"></div>
<svg style="left:688px;top:232px" width="13" height="13"><use href="#iCheck"/></svg>
<svg style="left:712px;top:230px" width="22" height="18"><use href="#iCatg"/></svg>
<svg style="left:755px;top:230px" width="24" height="18"><use href="#iAdd"/></svg>
<div style="left:743px;top:248px;width:48px;height:18px;background:#c0ffc0"></div>
<div style="left:686px;top:247px;width:56px;height:1px;background:#f0f0f0"></div>
<svg style="left:688px;top:250px" width="13" height="13"><use href="#iCheck"/></svg>
<svg style="left:712px;top:248px" width="22" height="18"><use href="#iCatg"/></svg>
<svg style="left:755px;top:248px" width="24" height="18"><use href="#iAdd"/></svg>
<div style="left:743px;top:266px;width:48px;height:18px;background:#c0ffc0"></div>
<div style="left:686px;top:265px;width:56px;height:1px;background:#f0f0f0"></div>
<svg style="left:688px;top:268px" width="13" height="13"><use href="#iCheck"/></svg>
<svg style="left:712px;top:266px" width="22" height="18"><use href="#iCatg"/></svg>
<svg style="left:755px;top:266px" width="24" height="18"><use href="#iAdd"/></svg>
<div style="left:743px;top:284px;width:48px;height:18px;background:#c0ffc0"></div>
<div style="left:686px;top:283px;width:56px;height:1px;background:#f0f0f0"></div>
<svg style="left:688px;top:286px" width="13" height="13"><use href="#iCheck"/></svg>
<svg style="left:712px;top:284px" width="22" height="18"><use href="#iCatg"/></svg>
<svg style="left:755px;top:284px" width="24" height="18"><use href="#iAdd"/></svg>
<div style="left:743px;top:302px;width:48px;height:18px;background:#c0ffc0"></div>
<div style="left:686px;top:301px;width:56px;height:1px;background:#f0f0f0"></div>
<svg style="left:688px;top:304px" width="13" height="13"><use href="#iCheck"/></svg>
<svg style="left:712px;top:302px" width="22" height="18"><use href="#iCatg"/></svg>
<svg style="left:755px;top:302px" width="24" height="18"><use href="#iAdd"/></svg>
<div style="left:743px;top:320px;width:48px;height:18px;background:#c0ffc0"></div>
<div style="left:686px;top:319px;width:56px;height:1px;background:#f0f0f0"></div>
<svg style="left:688px;top:322px" width="13" height="13"><use href="#iCheck"/></svg>
<svg style="left:712px;top:320px" width="22" height="18"><use href="#iCatg"/></svg>
<svg style="left:755px;top:320px" width="24" height="18"><use href="#iAdd"/></svg>
<div style="left:743px;top:338px;width:48px;height:18px;background:#c0ffc0"></div>
<div style="left:686px;top:337px;width:56px;height:1px;background:#f0f0f0"></div>
<svg style="left:688px;top:340px" width="13" height="13"><use href="#iCheck"/></svg>
<svg style="left:712px;top:338px" width="22" height="18"><use href="#iCatg"/></svg>
<svg style="left:755px;top:338px" width="24" height="18"><use href="#iAdd"/></svg>
<div style="left:743px;top:356px;width:48px;height:18px;background:#c0ffc0"></div>
<div style="left:686px;top:355px;width:56px;height:1px;background:#f0f0f0"></div>
<svg style="left:688px;top:358px" width="13" height="13"><use href="#iCheck"/></svg>
<svg style="left:712px;top:356px" width="22" height="18"><use href="#iCatg"/></svg>
<svg style="left:755px;top:356px" width="24" height="18"><use href="#iAdd"/></svg>
<div style="left:743px;top:374px;width:48px;height:18px;background:#c0ffc0"></div>
<div style="left:686px;top:373px;width:56px;height:1px;background:#f0f0f0"></div>
<svg style="left:688px;top:376px" width="13" height="13"><use href="#iCheck"/></svg>
<svg style="left:712px;top:374px" width="22" height="18"><use href="#iCatg"/></svg>
<svg style="left:755px;top:374px" width="24" height="18"><use href="#iAdd"/></svg>
<div style="left:743px;top:392px;width:48px;height:18px;background:#c0ffc0"></div>
<div style="left:686px;top:391px;width:56px;height:1px;background:#f0f0f0"></div>
<svg style="left:688px;top:394px" width="13" height="13"><use href="#iCheck"/></svg>
<svg style="left:712px;top:392px" width="22" height="18"><use href="#iCatg"/></svg>
<svg style="left:755px;top:392px" width="24" height="18"><use href="#iAdd"/></svg>
<div style="left:743px;top:410px;width:48px;height:18px;background:#c0ffc0"></div>
<div style="left:686px;top:409px;width:56px;height:1px;background:#f0f0f0"></div>
<svg style="left:688px;top:412px" width="13" height="13"><use href="#iCheck"/></svg>
<svg style="left:712px;top:410px" width="22" height="18"><use href="#iCatg"/></svg>
<svg style="left:755px;top:410px" width="24" height="18"><use href="#iAdd"/></svg>
<div style="left:743px;top:428px;width:48px;height:18px;background:#c0ffc0"></div>
<div style="left:686px;top:427px;width:56px;height:1px;background:#f0f0f0"></div>
<svg style="left:688px;top:430px" width="13" height="13"><use href="#iCheck"/></svg>
<svg style="left:712px;top:428px" width="22" height="18"><use href="#iCatg"/></svg>
<svg style="left:755px;top:428px" width="24" height="18"><use href="#iAdd"/></svg>
<div style="left:743px;top:446px;width:48px;height:18px;background:#c0ffc0"></div>
<div style="left:686px;top:445px;width:56px;height:1px;background:#f0f0f0"></div>
<svg style="left:688px;top:448px" width="13" height="13"><use href="#iCheck"/></svg>
<svg style="left:712px;top:446px" width="22" height="18"><use href="#iCatg"/></svg>
<svg style="left:755px;top:446px" width="24" height="18"><use href="#iAdd"/></svg>
<div style="left:743px;top:464px;width:48px;height:18px;background:#c0ffc0"></div>
<div style="left:686px;top:463px;width:56px;height:1px;background:#f0f0f0"></div>
<svg style="left:688px;top:466px" width="13" height="13"><use href="#iCheck"/></svg>
<svg style="left:712px;top:464px" width="22" height="18"><use href="#iCatg"/></svg>
<svg style="left:755px;top:464px" width="24" height="18"><use href="#iAdd"/></svg>
<div style="left:743px;top:482px;width:48px;height:18px;background:#c0ffc0"></div>
<div style="left:686px;top:481px;width:56px;height:1px;background:#f0f0f0"></div>
<svg style="left:688px;top:484px" width="13" height="13"><use href="#iCheck"/></svg>
<svg style="left:712px;top:482px" width="22" height="18"><use href="#iCatg"/></svg>
<svg style="left:755px;top:482px" width="24" height="18"><use href="#iAdd"/></svg>
<div style="left:743px;top:500px;width:48px;height:18px;background:#c0ffc0"></div>
<div style="left:686px;top:499px;width:56px;height:1px;background:#f0f0f0"></div>
<svg style="left:688px;top:502px" width="13" height="13"><use href="#iCheck"/></svg>
<svg style="left:712px;top:500px" width="22" height="18"><use href="#iCatg"/></svg>
<svg style="left:755px;top:500px" width="24" height="18"><use href="#iAdd"/></svg>
<div style="left:743px;top:518px;width:48px;height:18px;background:#c0ffc0"></div>
<div style="left:686px;top:517px;width:56px;height:1px;background:#f0f0f0"></div>
<svg style="left:688px;top:520px" width="13" height="13"><use href="#iCheck"/></svg>
<svg style="left:712px;top:518px" width="22" height="18"><use href="#iCatg"/></svg>
<svg style="left:755px;top:518px" width="24" height="18"><use href="#iAdd"/></svg>
<div style="left:743px;top:536px;width:48px;height:18px;background:#c0ffc0"></div>
<div style="left:686px;top:535px;width:56px;height:1px;background:#f0f0f0"></div>
<svg style="left:688px;top:538px" width="13" height="13"><use href="#iCheck"/></svg>
<svg style="left:712px;top:536px" width="22" height="18"><use href="#iCatg"/></svg>
<svg style="left:755px;top:536px" width="24" height="18"><use href="#iAdd"/></svg>
<div style="left:743px;top:554px;width:48px;height:18px;background:#c0ffc0"></div>
<div style="left:686px;top:553px;width:56px;height:1px;background:#f0f0f0"></div>
<svg style="left:688px;top:556px" width="13" height="13"><use href="#iCheck"/></svg>
<svg style="left:712px;top:554px" width="22" height="18"><use href="#iCatg"/></svg>
<svg style="left:755px;top:554px" width="24" height="18"><use href="#iAdd"/></svg>
<div style="left:743px;top:572px;width:48px;height:18px;background:#c0ffc0"></div>
<div style="left:686px;top:571px;width:56px;height:1px;background:#f0f0f0"></div>
<svg style="left:688px;top:574px" width="13" height="13"><use href="#iCheck"/></svg>
<svg style="left:712px;top:572px" width="22" height="18"><use href="#iCatg"/></svg>
<svg style="left:755px;top:572px" width="24" height="18"><use href="#iAdd"/></svg>
<div style="left:743px;top:590px;width:48px;height:18px;background:#c0ffc0"></div>
<div style="left:686px;top:589px;width:56px;height:1px;background:#f0f0f0"></div>
<svg style="left:688px;top:592px" width="13" height="13"><use href="#iCheck"/></svg>
<svg style="left:712px;top:590px" width="22" height="18"><use href="#iCatg"/></svg>
<svg style="left:755px;top:590px" width="24" height="18"><use href="#iAdd"/></svg>
<div style="left:743px;top:608px;width:48px;height:18px;background:#c0ffc0"></div>
<div style="left:686px;top:607px;width:56px;height:1px;background:#f0f0f0"></div>
<svg style="left:688px;top:610px" width="13" height="13"><use href="#iCheck"/></svg>
<svg style="left:712px;top:608px" width="22" height="18"><use href="#iCatg"/></svg>
<svg style="left:755px;top:608px" width="24" height="18"><use href="#iAdd"/></svg>
<div style="left:743px;top:626px;width:48px;height:18px;background:#c0ffc0"></div>
<div style="left:686px;top:625px;width:56px;height:1px;background:#f0f0f0"></div>
<svg style="left:688px;top:628px" width="13" height="13"><use href="#iCheck"/></svg>
<svg style="left:712px;top:626px" width="22" height="18"><use href="#iCatg"/></svg>
<svg style="left:755px;top:626px" width="24" height="18"><use href="#iAdd"/></svg>
<div style="left:743px;top:644px;width:48px;height:18px;background:#c0ffc0"></div>
<div style="left:686px;top:643px;width:56px;height:1px;background:#f0f0f0"></div>
<svg style="left:688px;top:646px" width="13" height="13"><use href="#iCheck"/></svg>
<svg style="left:712px;top:644px" width="22" height="18"><use href="#iCatg"/></svg>
<svg style="left:755px;top:644px" width="24" height="18"><use href="#iAdd"/></svg>
<div style="left:743px;top:662px;width:48px;height:18px;background:#c0ffc0"></div>
<div style="left:686px;top:661px;width:56px;height:1px;background:#f0f0f0"></div>
<svg style="left:688px;top:664px" width="13" height="13"><use href="#iCheck"/></svg>
<svg style="left:712px;top:662px" width="22" height="18"><use href="#iCatg"/></svg>
<svg style="left:755px;top:662px" width="24" height="18"><use href="#iAdd"/></svg>
<div style="left:743px;top:680px;width:48px;height:18px;background:#c0ffc0"></div>
<div style="left:686px;top:679px;width:56px;height:1px;background:#f0f0f0"></div>
<svg style="left:688px;top:682px" width="13" height="13"><use href="#iCheck"/></svg>
<svg style="left:712px;top:680px" width="22" height="18"><use href="#iCatg"/></svg>
<svg style="left:755px;top:680px" width="24" height="18"><use href="#iAdd"/></svg>
<div style="left:743px;top:698px;width:48px;height:18px;background:#c0ffc0"></div>
<div style="left:686px;top:697px;width:56px;height:1px;background:#f0f0f0"></div>
<svg style="left:688px;top:700px" width="13" height="13"><use href="#iCheck"/></svg>
<svg style="left:712px;top:698px" width="22" height="18"><use href="#iCatg"/></svg>
<svg style="left:755px;top:698px" width="24" height="18"><use href="#iAdd"/></svg>
<div style="left:743px;top:716px;width:48px;height:18px;background:#c0ffc0"></div>
<div style="left:686px;top:715px;width:56px;height:1px;background:#f0f0f0"></div>
<svg style="left:688px;top:718px" width="13" height="13"><use href="#iCheck"/></svg>
<svg style="left:712px;top:716px" width="22" height="18"><use href="#iCatg"/></svg>
<svg style="left:755px;top:716px" width="24" height="18"><use href="#iAdd"/></svg>
<div style="left:743px;top:734px;width:48px;height:18px;background:#c0ffc0"></div>
<div style="left:686px;top:733px;width:56px;height:1px;background:#f0f0f0"></div>
<svg style="left:688px;top:736px" width="13" height="13"><use href="#iCheck"/></svg>
<svg style="left:712px;top:734px" width="22" height="18"><use href="#iCatg"/></svg>
<svg style="left:755px;top:734px" width="24" height="18"><use href="#iAdd"/></svg>
<div style="left:743px;top:752px;width:48px;height:18px;background:#c0ffc0"></div>
<div style="left:686px;top:751px;width:56px;height:1px;background:#f0f0f0"></div>
<svg style="left:688px;top:754px" width="13" height="13"><use href="#iCheck"/></svg>
<svg style="left:712px;top:752px" width="22" height="18"><use href="#iCatg"/></svg>
<svg style="left:755px;top:752px" width="24" height="18"><use href="#iAdd"/></svg>
<div style="left:743px;top:770px;width:48px;height:18px;background:#c0ffc0"></div>
<div style="left:686px;top:769px;width:56px;height:1px;background:#f0f0f0"></div>
<svg style="left:688px;top:772px" width="13" height="13"><use href="#iCheck"/></svg>
<svg style="left:712px;top:770px" width="22" height="18"><use href="#iCatg"/></svg>
<svg style="left:755px;top:770px" width="24" height="18"><use href="#iAdd"/></svg>
<div style="left:743px;top:788px;width:48px;height:18px;background:#c0ffc0"></div>
<div style="left:686px;top:787px;width:56px;height:1px;background:#f0f0f0"></div>
<svg style="left:688px;top:790px" width="13" height="13"><use href="#iCheck"/></svg>
<svg style="left:712px;top:788px" width="22" height="18"><use href="#iCatg"/></svg>
<svg style="left:755px;top:788px" width="24" height="18"><use href="#iAdd"/></svg>
<div style="left:743px;top:806px;width:48px;height:18px;background:#c0ffc0"></div>
<div style="left:686px;top:805px;width:56px;height:1px;background:#f0f0f0"></div>
<svg style="left:688px;top:808px" width="13" height="13"><use href="#iCheck"/></svg>
<svg style="left:712px;top:806px" width="22" height="18"><use href="#iCatg"/></svg>
<svg style="left:755px;top:806px" width="24" height="18"><use href="#iAdd"/></svg>
<div style="left:743px;top:824px;width:48px;height:18px;background:#c0ffc0"></div>
<div style="left:686px;top:823px;width:56px;height:1px;background:#f0f0f0"></div>
<svg style="left:688px;top:826px" width="13" height="13"><use href="#iCheck"/></svg>
<svg style="left:712px;top:824px" width="22" height="18"><use href="#iCatg"/></svg>
<svg style="left:755px;top:824px" width="24" height="18"><use href="#iAdd"/></svg>
<div style="left:743px;top:842px;width:48px;height:18px;background:#c0ffc0"></div>
<div style="left:686px;top:841px;width:56px;height:1px;background:#f0f0f0"></div>
<svg style="left:688px;top:844px" width="13" height="13"><use href="#iCheck"/></svg>
<svg style="left:712px;top:842px" width="22" height="18"><use href="#iCatg"/></svg>
<svg style="left:755px;top:842px" width="24" height="18"><use href="#iAdd"/></svg>
<div style="left:743px;top:860px;width:48px;height:18px;background:#c0ffc0"></div>
<div style="left:686px;top:859px;width:56px;height:1px;background:#f0f0f0"></div>
<svg style="left:688px;top:862px" width="13" height="13"><use href="#iCheck"/></svg>
<svg style="left:712px;top:860px" width="22" height="18"><use href="#iCatg"/></svg>
<svg style="left:755px;top:860px" width="24" height="18"><use href="#iAdd"/></svg>
<div style="left:743px;top:878px;width:48px;height:18px;background:#c0ffc0"></div>
<div style="left:686px;top:877px;width:56px;height:1px;background:#f0f0f0"></div>
<svg style="left:688px;top:880px" width="13" height="13"><use href="#iCheck"/></svg>
<svg style="left:712px;top:878px" width="22" height="18"><use href="#iCatg"/></svg>
<svg style="left:755px;top:878px" width="24" height="18"><use href="#iAdd"/></svg>
<div style="left:743px;top:896px;width:48px;height:18px;background:#c0ffc0"></div>
<div style="left:686px;top:895px;width:56px;height:1px;background:#f0f0f0"></div>
<svg style="left:688px;top:898px" width="13" height="13"><use href="#iCheck"/></svg>
<svg style="left:712px;top:896px" width="22" height="18"><use href="#iCatg"/></svg>
<svg style="left:755px;top:896px" width="24" height="18"><use href="#iAdd"/></svg>
<div style="left:743px;top:914px;width:48px;height:18px;background:#c0ffc0"></div>
<div style="left:686px;top:913px;width:56px;height:1px;background:#f0f0f0"></div>
<svg style="left:688px;top:916px" width="13" height="13"><use href="#iCheck"/></svg>
<svg style="left:712px;top:914px" width="22" height="18"><use href="#iCatg"/></svg>
<svg style="left:755px;top:914px" width="24" height="18"><use href="#iAdd"/></svg>
<div style="left:743px;top:932px;width:48px;height:18px;background:#c0ffc0"></div>
<div style="left:686px;top:931px;width:56px;height:1px;background:#f0f0f0"></div>
<svg style="left:688px;top:934px" width="13" height="13"><use href="#iCheck"/></svg>
<svg style="left:712px;top:932px" width="22" height="18"><use href="#iCatg"/></svg>
<svg style="left:755px;top:932px" width="24" height="18"><use href="#iAdd"/></svg>
<div style="left:743px;top:950px;width:48px;height:18px;background:#c0ffc0"></div>
<div style="left:686px;top:949px;width:56px;height:1px;background:#f0f0f0"></div>
<svg style="left:688px;top:952px" width="13" height="13"><use href="#iCheck"/></svg>
<svg style="left:712px;top:950px" width="22" height="18"><use href="#iCatg"/></svg>
<svg style="left:755px;top:950px" width="24" height="18"><use href="#iAdd"/></svg>
<div style="left:685px;top:229px;width:106px;height:1px;background:#a0a0a0"></div>
<div style="left:685px;top:247px;width:106px;height:1px;background:#a0a0a0"></div>
<div style="left:685px;top:301px;width:106px;height:1px;background:#a0a0a0"></div>
<div style="left:685px;top:319px;width:106px;height:1px;background:#a0a0a0"></div>
<div style="left:685px;top:355px;width:106px;height:1px;background:#a0a0a0"></div>
<div style="left:685px;top:391px;width:106px;height:1px;background:#a0a0a0"></div>
<div style="left:685px;top:751px;width:106px;height:1px;background:#a0a0a0"></div>
<div style="left:685px;top:769px;width:106px;height:1px;background:#a0a0a0"></div>
<div style="left:685px;top:787px;width:106px;height:1px;background:#a0a0a0"></div>
<div style="left:685px;top:805px;width:106px;height:1px;background:#a0a0a0"></div>
<div style="left:685px;top:895px;width:106px;height:1px;background:#a0a0a0"></div>
<div style="left:685px;top:913px;width:106px;height:1px;background:#a0a0a0"></div>
<div style="left:685px;top:949px;width:106px;height:1px;background:#a0a0a0"></div>
<div style="left:685px;top:175px;width:106px;height:1px;background:#a0a0a0"></div>
<div style="left:685px;top:967px;width:106px;height:1px;background:#a0a0a0"></div>
<div style="left:685px;top:152px;width:1px;height:816px;background:#a0a0a0"></div>
<div style="left:791px;top:152px;width:1px;height:816px;background:#a0a0a0"></div>
<div style="left:742px;top:176px;width:1px;height:792px;background:#a0a0a0"></div>
<div style="left:800px;top:175px;width:658px;height:1px;background:#a0a0a0"></div>
<div style="left:800px;top:967px;width:658px;height:1px;background:#a0a0a0"></div>
<div style="left:800px;top:152px;width:1px;height:816px;background:#a0a0a0"></div>
<div style="left:23px;top:153px;width:1px;height:22px;background:linear-gradient(#fafafa,#a8a8a8)"></div>
<div style="left:24px;top:153px;width:1px;height:22px;background:#fff"></div>
<div style="left:600px;top:153px;width:1px;height:22px;background:linear-gradient(#fafafa,#a8a8a8)"></div>
<div style="left:601px;top:153px;width:1px;height:22px;background:#fff"></div>
<div style="left:703px;top:153px;width:1px;height:22px;background:linear-gradient(#fafafa,#a8a8a8)"></div>
<div style="left:704px;top:153px;width:1px;height:22px;background:#fff"></div>
<div style="left:742px;top:153px;width:1px;height:22px;background:linear-gradient(#fafafa,#a8a8a8)"></div>
<div style="left:743px;top:153px;width:1px;height:22px;background:#fff"></div>
<div style="left:1381px;top:153px;width:1px;height:22px;background:linear-gradient(#fafafa,#a8a8a8)"></div>
<div style="left:1382px;top:153px;width:1px;height:22px;background:#fff"></div>
<div style="left:1457px;top:153px;width:1px;height:22px;background:linear-gradient(#fafafa,#a8a8a8)"></div>
<div class="t" style="left:29px;top:153px;height:23px;line-height:23px;font-size:12px;font-weight:bold">相对路径</div>
<div class="t" style="left:605px;top:153px;height:23px;line-height:23px;font-size:12px;font-weight:bold">大小</div>
<div class="t" style="left:806px;top:153px;height:23px;line-height:23px;font-size:12px;font-weight:bold">相对路径</div>
<div class="t" style="left:1386px;top:153px;height:23px;line-height:23px;font-size:12px;font-weight:bold">大小</div>
<svg style="left:634px;top:154px" width="9" height="6" viewBox="0 0 9 6" ><path d="M0 0 H8.5 L4.25 5 Z" fill="#5a6ad8"/></svg>
<svg style="left:715px;top:157px" width="17" height="14" viewBox="0 0 17 14" ><defs><linearGradient id="gGF" x1="0" y1="0" x2="0" y2="1"><stop offset="0" stop-color="#b0b0b0"/><stop offset="1" stop-color="#909090"/></linearGradient></defs><path d="M1 3 V1 H6 L7 2 H15 V3 Z" fill="#aaa"/><path d="M0 3 H16 V13 H1 Z" fill="url(#gGF)"/><circle cx="7.9" cy="8" r="3.6" fill="#6a6a6a" stroke="#c8c8c8" stroke-width="0.8"/><path d="M10.5 10.5 L13 13" stroke="#555" stroke-width="1.4"/></svg>
<svg style="left:759px;top:156px" width="16" height="16" viewBox="0 0 16 16" ><use href="#iSync" transform="scale(0.5)"/></svg>
<div style="left:1458px;top:152px;width:13px;height:816px;background:#f0f0f0"></div>
<div style="left:1459px;top:169px;width:12px;height:614px;background:#cdcdcd"></div>
<svg style="left:1459px;top:156px" width="12" height="10" viewBox="0 0 12 10" ><path d="M2 7 L6 3 L10 7" fill="none" stroke="#606060" stroke-width="1.6"/></svg>
<svg style="left:1459px;top:955px" width="12" height="10" viewBox="0 0 12 10" ><path d="M2 3 L6 7 L10 3" fill="none" stroke="#606060" stroke-width="1.6"/></svg>
<div style="left:4px;top:968px;width:1467px;height:18px;background:#f0f0f0"></div>
<div style="left:4px;top:968px;width:1px;height:18px;background:#a0a0a0"></div>
<div style="left:4px;top:986px;width:1467px;height:1px;background:#fff"></div>
<div style="left:4px;top:987px;width:1467px;height:4px;background:#dadada"></div>
<svg style="left:233px;top:970px" width="13" height="16"><use href="#iFolder"/></svg>
<div class="t" style="left:249px;top:968px;height:18px;line-height:18px;font-size:12px">9 目录</div>
<svg style="left:296px;top:970px" width="12" height="16" viewBox="0 0 12 16" ><path d="M0.5 0.5 H8 L11.5 4 V15.5 H0.5 Z" fill="#fff" stroke="#555"/></svg>
<div class="t" style="left:311px;top:968px;height:18px;line-height:18px;font-size:12px;letter-spacing:0.45px">47 文件 (31.2 MB)</div>
<div style="left:641px;top:970px;width:1px;height:15px;background:#a0a0a0"></div>
<div style="left:835px;top:970px;width:1px;height:15px;background:#a0a0a0"></div>
<div class="t" style="left:669px;top:968px;height:18px;line-height:18px;font-size:12px;letter-spacing:0.3px">显示 56 个项目中的 56 个</div></body></html>
